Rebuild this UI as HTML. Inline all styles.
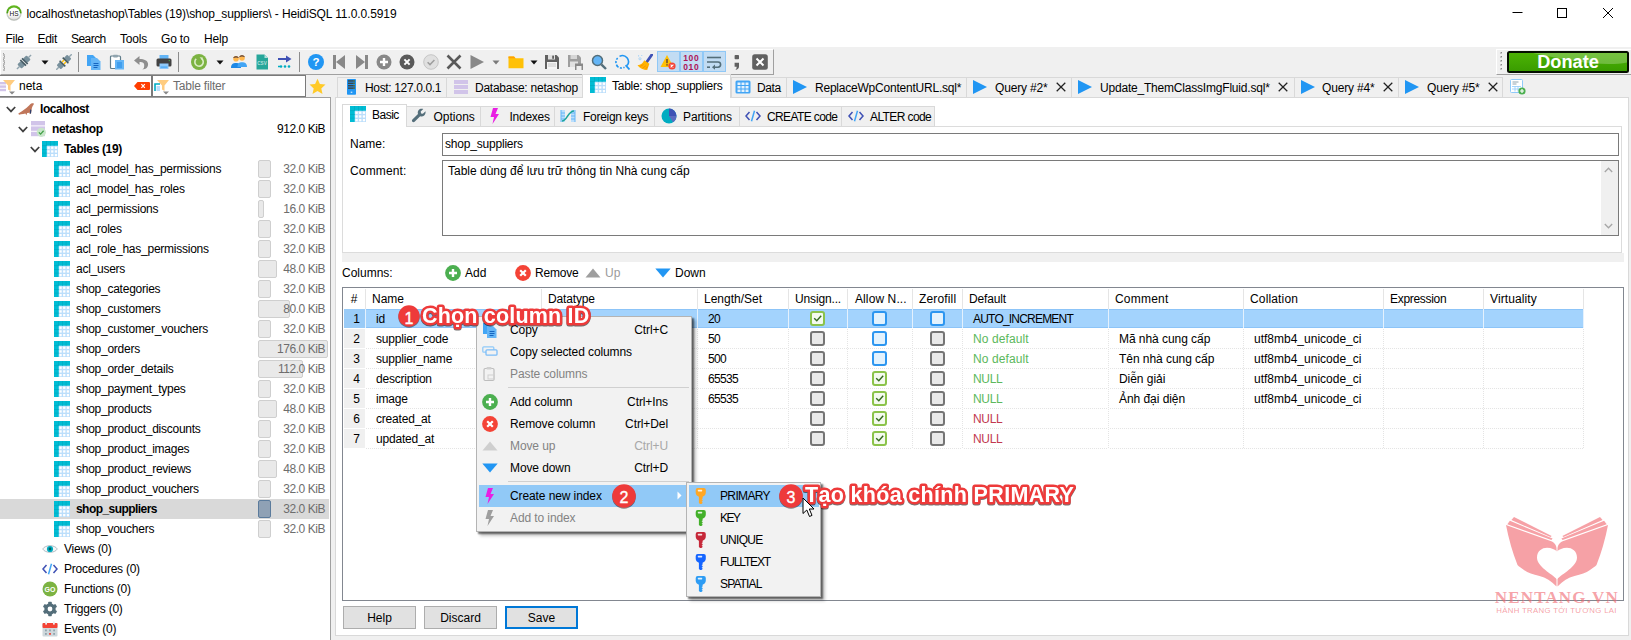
<!DOCTYPE html><html><head><meta charset="utf-8"><title>HeidiSQL</title><style>
html,body{margin:0;padding:0}
body{width:1631px;height:640px;position:relative;overflow:hidden;background:#f0f0f0;font-family:"Liberation Sans",sans-serif;font-size:12px;color:#000}
.b{position:absolute;box-sizing:border-box}
.t{position:absolute;white-space:nowrap;line-height:16px;height:16px;font-size:12px}
.bold{font-weight:bold;letter-spacing:-0.55px}
.gray{color:#6d6d6d}
.r{text-align:right}
.c{text-align:center}
.sz{letter-spacing:-0.45px}
.tn{letter-spacing:-0.25px}
</style></head><body>
<div class="b " style="left:0px;top:0px;width:1631px;height:47px;background:#fff"></div>
<svg class="b" style="left:6px;top:5px;" width="16" height="16" viewBox="0 0 16 16"><defs><linearGradient id="hg" x1="0" y1="0" x2="0" y2="1"><stop offset="0" stop-color="#66bb22"/><stop offset="0.48" stop-color="#4c9e14"/><stop offset="0.56" stop-color="#cfd4cc"/><stop offset="1" stop-color="#b4b8b2"/></linearGradient><linearGradient id="hg2" x1="0" y1="0" x2="0" y2="1"><stop offset="0.55" stop-color="#ffffff"/><stop offset="1" stop-color="#dcdcdc"/></linearGradient></defs><circle cx="8" cy="8" r="7.700" fill="url(#hg)"/><circle cx="8" cy="8.600" r="6" fill="url(#hg2)"/><text x="8" y="11.400" font-size="8" text-anchor="middle" fill="#111" font-family="Liberation Sans, sans-serif" textLength="9" lengthAdjust="spacingAndGlyphs">HS</text></svg>
<div class="t " style="left:26.5px;top:6px;letter-spacing:-0.11px">localhost\netashop\Tables (19)\shop_suppliers\ - HeidiSQL 11.0.0.5919</div>
<svg class="b" style="left:1512px;top:6px;" width="12" height="12" viewBox="0 0 12 12"><path d="M0.5 6.5h10" stroke="#000" stroke-width="1"/></svg>
<svg class="b" style="left:1556px;top:7px;" width="12" height="12" viewBox="0 0 12 12"><rect x="1.5" y="1.5" width="9" height="9" fill="none" stroke="#000" stroke-width="1"/></svg>
<svg class="b" style="left:1602px;top:7px;" width="12" height="12" viewBox="0 0 12 12"><path d="M1 1l10 10M11 1L1 11" stroke="#000" stroke-width="1"/></svg>
<div class="t " style="left:5.5px;top:31px;letter-spacing:-0.3px">File</div>
<div class="t " style="left:37.5px;top:31px;letter-spacing:-0.3px">Edit</div>
<div class="t " style="left:71px;top:31px;letter-spacing:-0.55px">Search</div>
<div class="t " style="left:120px;top:31px;letter-spacing:-0.2px">Tools</div>
<div class="t " style="left:161px;top:31px;letter-spacing:-0.2px">Go to</div>
<div class="t " style="left:204px;top:31px;letter-spacing:-0.15px">Help</div>
<div class="b " style="left:0px;top:49px;width:774px;height:26px;border:1px solid #fff;border-right:1px solid #a0a0a0;border-bottom:1px solid #a0a0a0;background:#f0f0f0"></div>
<div class="b " style="left:3px;top:53px;width:1px;height:1px;background:#a0a0a0"></div>
<div class="b " style="left:3px;top:54px;width:2px;height:2px;background:#bdbdbd"></div>
<div class="b " style="left:4px;top:56px;width:1px;height:1px;background:#a0a0a0"></div>
<div class="b " style="left:3px;top:57px;width:2px;height:2px;background:#bdbdbd"></div>
<div class="b " style="left:3px;top:59px;width:1px;height:1px;background:#a0a0a0"></div>
<div class="b " style="left:3px;top:60px;width:2px;height:2px;background:#bdbdbd"></div>
<div class="b " style="left:4px;top:62px;width:1px;height:1px;background:#a0a0a0"></div>
<div class="b " style="left:3px;top:63px;width:2px;height:2px;background:#bdbdbd"></div>
<div class="b " style="left:3px;top:65px;width:1px;height:1px;background:#a0a0a0"></div>
<div class="b " style="left:3px;top:66px;width:2px;height:2px;background:#bdbdbd"></div>
<div class="b " style="left:4px;top:68px;width:1px;height:1px;background:#a0a0a0"></div>
<div class="b " style="left:3px;top:69px;width:2px;height:2px;background:#bdbdbd"></div>
<svg class="b" style="left:16px;top:54px;" width="16" height="16" viewBox="0 0 16 16"><g transform="rotate(45 8 8)"><rect x="5" y="1.5" width="6" height="5" rx="1" fill="#78909c"/><rect x="5" y="9.5" width="6" height="5" rx="1" fill="#78909c"/><rect x="4" y="6" width="8" height="1.6" fill="#455a64"/><rect x="4" y="8.4" width="8" height="1.6" fill="#455a64"/><rect x="7.3" y="-2" width="1.4" height="4" fill="#90a4ae"/><rect x="7.3" y="14" width="1.4" height="4" fill="#90a4ae"/></g></svg>
<svg class="b" style="left:37px;top:54px;" width="16" height="16" viewBox="0 0 16 16"><path d="M4.5 6.5 L11.5 6.5 L8 10.5 Z" fill="#111"/></svg>
<svg class="b" style="left:56px;top:54px;" width="16" height="16" viewBox="0 0 16 16"><g transform="rotate(45 8 8)"><rect x="5" y="0.5" width="6" height="5" rx="1" fill="#78909c"/><rect x="5" y="10.5" width="6" height="5" rx="1" fill="#78909c"/><rect x="4" y="5" width="8" height="1.6" fill="#455a64"/><rect x="4" y="9.4" width="8" height="1.6" fill="#455a64"/><rect x="6" y="6.6" width="1.4" height="2.8" fill="#ffc107"/><rect x="8.6" y="6.6" width="1.4" height="2.8" fill="#ffc107"/><rect x="7.3" y="-3" width="1.4" height="4" fill="#90a4ae"/><rect x="7.3" y="15" width="1.4" height="4" fill="#90a4ae"/></g></svg>
<svg class="b" style="left:86px;top:54px;" width="16" height="16" viewBox="0 0 16 16"><path d="M1 1 h6 l3 3 v8 h-9z" fill="#42a5f5"/><path d="M5 4 h6 l3.5 3.5 v8.5 h-9.5z" fill="#64b5f6"/><path d="M7.500 9.500h5M7.500 11.500h5M7.500 13.500h4" stroke="#1565c0" stroke-width="1"/></svg>
<svg class="b" style="left:109px;top:54px;" width="16" height="16" viewBox="0 0 16 16"><rect x="1.5" y="2" width="10" height="12.5" rx="1" fill="#fff" stroke="#607d8b" stroke-width="1.2"/><rect x="4" y="0.8" width="5" height="2.6" rx="0.8" fill="#90a4ae"/><rect x="6" y="6" width="9" height="9.5" fill="#64b5f6"/><path d="M8 9h5M8 11h5M8 13h5" stroke="#1e88e5" stroke-width="1"/></svg>
<svg class="b" style="left:133px;top:54px;" width="16" height="16" viewBox="0 0 16 16"><path d="M6.5 2 L1 6.5 L6.5 11 V8 C10 8 12 9 11 13.5 C10.7 14.5 10 15.2 9 15.5 C13.5 15.5 15.5 12.5 15 9.5 C14.5 6.5 11.5 5 6.5 5 Z" fill="#8e8e8e"/></svg>
<svg class="b" style="left:156px;top:54px;" width="16" height="16" viewBox="0 0 16 16"><rect x="3.5" y="1" width="9" height="4.5" fill="#64b5f6"/><rect x="0.5" y="4.5" width="15" height="8" rx="1.5" fill="#424242"/><rect x="3.5" y="9.5" width="9" height="5.5" fill="#90caf9"/><rect x="4.5" y="12.5" width="7" height="1.2" fill="#42a5f5"/><circle cx="13.3" cy="6.6" r="0.7" fill="#4caf50"/></svg>
<svg class="b" style="left:191px;top:54px;" width="16" height="16" viewBox="0 0 16 16"><circle cx="8" cy="8" r="8" fill="#7cb342"/><path d="M10.8 4.8 A4.2 4.2 0 1 1 5.2 4.9" stroke="#dcedc8" stroke-width="1.6" fill="none"/><path d="M8.6 3.2 L11.8 3.4 L11.4 6.6 Z" fill="#dcedc8"/></svg>
<svg class="b" style="left:212px;top:54px;" width="16" height="16" viewBox="0 0 16 16"><path d="M4.5 6.5 L11.5 6.5 L8 10.5 Z" fill="#111"/></svg>
<svg class="b" style="left:231px;top:54px;" width="16" height="16" viewBox="0 0 16 16"><circle cx="5" cy="4.8" r="2.8" fill="#ffb74d"/><path d="M0 14 C0 10 2 9 5 9 C8 9 10 10 10 14Z" fill="#1e88e5"/><path d="M2.2 4 C2.6 1.5 7.4 1.5 7.8 4 C6 3.2 4 3.2 2.2 4Z" fill="#5d4037"/><circle cx="11" cy="4" r="2.8" fill="#ffb74d"/><path d="M6.5 13 C6.5 9.5 8 8.2 11 8.2 C14 8.2 16 9.5 16 13Z" fill="#42a5f5"/><path d="M8.2 3.2 C8.6 0.7 13.4 0.7 13.8 3.2 C12 2.4 10 2.4 8.2 3.2Z" fill="#5d4037"/></svg>
<svg class="b" style="left:254px;top:54px;" width="16" height="16" viewBox="0 0 16 16"><path d="M2.5 0.5 h8 l3.5 3.5 v11.5 h-11.5z" fill="#26a69a"/><path d="M10.5 0.5 l3.5 3.5 h-3.5z" fill="#b2dfdb"/><text x="8" y="11" font-size="4.6" font-weight="bold" text-anchor="middle" fill="#b2dfdb" font-family="Liberation Sans, sans-serif">CSV</text></svg>
<svg class="b" style="left:277px;top:54px;" width="16" height="16" viewBox="0 0 16 16"><path d="M1 5h9" stroke="#3f51b5" stroke-width="2"/><path d="M9 1.5 L14.5 5 L9 8.5Z" fill="#3f51b5"/><circle cx="4" cy="12.5" r="1.3" fill="#00acc1"/><circle cx="8" cy="12.5" r="1.3" fill="#00acc1"/><circle cx="12" cy="12.5" r="1.3" fill="#00acc1"/><path d="M1 12.5h2" stroke="#00acc1" stroke-width="1.4"/></svg>
<svg class="b" style="left:308px;top:54px;" width="16" height="16" viewBox="0 0 16 16"><circle cx="8" cy="8" r="8" fill="#2196f3"/><text x="8" y="12.2" font-size="11.5" font-weight="bold" text-anchor="middle" fill="#fff" font-family="Liberation Sans, sans-serif">?</text></svg>
<svg class="b" style="left:331px;top:54px;" width="16" height="16" viewBox="0 0 16 16"><rect x="2" y="1" width="3" height="14" fill="#888888"/><path d="M14 1 L5 8 L14 15Z" fill="#888888"/></svg>
<svg class="b" style="left:354px;top:54px;" width="16" height="16" viewBox="0 0 16 16"><rect x="11" y="1" width="3" height="14" fill="#888888"/><path d="M2 1 L11 8 L2 15Z" fill="#888888"/></svg>
<svg class="b" style="left:376px;top:54px;" width="16" height="16" viewBox="0 0 16 16"><circle cx="8" cy="8" r="7.5" fill="#888888"/><path d="M8 4v8M4 8h8" stroke="#fff" stroke-width="2.4"/></svg>
<svg class="b" style="left:399px;top:54px;" width="16" height="16" viewBox="0 0 16 16"><circle cx="8" cy="8" r="7.5" fill="#5a5a5a"/><path d="M5.4 5.4l5.2 5.2M10.6 5.4l-5.2 5.2" stroke="#fff" stroke-width="2"/></svg>
<svg class="b" style="left:423px;top:54px;" width="16" height="16" viewBox="0 0 16 16"><circle cx="8" cy="8" r="7.3" fill="#e0e0e0" stroke="#bdbdbd" stroke-width="0.8"/><path d="M4.6 8.2 l2.4 2.4 l4.4 -4.6" stroke="#9e9e9e" stroke-width="1.5" fill="none"/></svg>
<svg class="b" style="left:446px;top:54px;" width="16" height="16" viewBox="0 0 16 16"><path d="M1.500 1.500 L14.500 14.500 M14.500 1.500 L1.500 14.500" stroke="#5a5a5a" stroke-width="2.600"/></svg>
<svg class="b" style="left:469px;top:54px;" width="16" height="16" viewBox="0 0 16 16"><path d="M1.5 1 L15 8 L1.5 15 Z" fill="#888888"/></svg>
<svg class="b" style="left:488px;top:54px;" width="16" height="16" viewBox="0 0 16 16"><path d="M4.5 6.5 L11.5 6.5 L8 10.5 Z" fill="#7a7a7a"/></svg>
<svg class="b" style="left:508px;top:54px;" width="16" height="16" viewBox="0 0 16 16"><path d="M0.5 2.5 h5.5 l1.5 1.8 h8 v10 h-15z" fill="#ffc107"/><path d="M0.5 2.5 h5.5 l1.5 1.8 h-7z" fill="#ffa000"/></svg>
<svg class="b" style="left:526px;top:54px;" width="16" height="16" viewBox="0 0 16 16"><path d="M4.5 6.5 L11.5 6.5 L8 10.5 Z" fill="#111"/></svg>
<svg class="b" style="left:544px;top:54px;" width="16" height="16" viewBox="0 0 16 16"><path d="M1 1 h11.5 l2.5 2.5 v11.5 h-14z" fill="#616161"/><rect x="4" y="1" width="7" height="4.5" fill="#e0e0e0"/><rect x="8.2" y="1.6" width="1.8" height="3.2" fill="#616161"/><rect x="3" y="8" width="10" height="7" fill="#f5f5f5"/><path d="M4 10h8M4 12h8" stroke="#bdbdbd" stroke-width="0.8"/></svg>
<svg class="b" style="left:567px;top:54px;" width="16" height="16" viewBox="0 0 16 16"><path d="M1 1 h10.5 l2.5 2.5 v9.5 h-13z" fill="#9e9e9e"/><rect x="3.5" y="1" width="6.5" height="4" fill="#d6d6d6"/><rect x="3" y="7.5" width="8" height="5.5" fill="#e0e0e0"/><rect x="8" y="9.5" width="8" height="6.5" fill="#888888"/><rect x="9.5" y="12" width="5" height="4" fill="#eee"/></svg>
<svg class="b" style="left:591px;top:54px;" width="16" height="16" viewBox="0 0 16 16"><circle cx="6.5" cy="6.5" r="5" fill="#64b5f6" stroke="#546e7a" stroke-width="1.5"/><path d="M10.3 10.3 L15 15" stroke="#546e7a" stroke-width="2.4"/></svg>
<svg class="b" style="left:614px;top:54px;" width="16" height="16" viewBox="0 0 16 16"><path d="M3.5 12.2 A6 6 0 0 1 4 3.6" stroke="#2196f3" stroke-width="1.6" fill="none" stroke-dasharray="2 1.4"/><path d="M5.5 2.4 A6 6 0 0 1 13 11.5" stroke="#2196f3" stroke-width="1.6" fill="none"/><path d="M11.6 11.2 L15.5 15.5" stroke="#2196f3" stroke-width="1.8"/><path d="M3 12 A6 6 0 0 0 10.5 13.2" stroke="#2196f3" stroke-width="1.6" fill="none" stroke-dasharray="2 1.4"/></svg>
<svg class="b" style="left:637px;top:54px;" width="16" height="16" viewBox="0 0 16 16"><path d="M14.800 0.800 L9.600 8.200" stroke="#3f51b5" stroke-width="2.800" stroke-linecap="round"/><path d="M7.200 6.200 L12.400 9.800 L10.200 16 C6.500 16 2.500 14.200 0.500 11.200 C3.800 10.800 6 9 7.200 6.200Z" fill="#ffb300"/><path d="M3 12.500 L6.500 10.500M5.500 14.200 L8.800 11.800M8.500 15.300 L10.500 12.500" stroke="#fb8c00" stroke-width="0.900"/><circle cx="3" cy="4.800" r="1.100" fill="none" stroke="#90caf9" stroke-width="0.700"/><circle cx="1.600" cy="1.800" r="0.600" fill="#90caf9"/><circle cx="4.800" cy="1.600" r="0.500" fill="#90caf9"/></svg>
<svg class="b" style="left:729px;top:54px;" width="16" height="16" viewBox="0 0 16 16"><rect x="5.600" y="1" width="4.400" height="4.200" rx="0.800" fill="#616161"/><path d="M5.600 8.800h4.400v3.600c0 1.800-1.200 3.200-3.600 3.600 1-.9 1.300-1.800 1.200-3.200H5.600z" fill="#616161"/></svg>
<svg class="b" style="left:752px;top:54px;" width="16" height="16" viewBox="0 0 16 16"><rect x="0.200" y="0.200" width="15.600" height="15.600" rx="2.500" fill="#616161"/><path d="M4.5 4.5l7 7M11.5 4.5l-7 7" stroke="#fff" stroke-width="2"/></svg>
<div class="b " style="left:657px;top:51px;width:23px;height:21px;background:#c2dcf3;border:1px solid #90c8f6"></div>
<svg class="b" style="left:660px;top:54px;" width="16" height="16" viewBox="0 0 16 16"><path d="M7 1 L13.5 13 H0.5 Z" fill="#ffc107"/><rect x="6.3" y="5" width="1.4" height="4.2" fill="#5d4037"/><rect x="6.3" y="10.2" width="1.4" height="1.4" fill="#5d4037"/><circle cx="12" cy="12" r="3.6" fill="#f44336"/><path d="M10.6 10.6l2.8 2.8M13.4 10.6l-2.8 2.8" stroke="#fff" stroke-width="1.1"/></svg>
<div class="b " style="left:680px;top:51px;width:23px;height:21px;background:#c2dcf3;border:1px solid #90c8f6"></div>
<svg class="b" style="left:683px;top:54px;" width="16" height="16" viewBox="0 0 16 16"><text x="8.300" y="7" font-size="8.500" font-weight="bold" text-anchor="middle" fill="#ad1457" font-family="Liberation Sans, sans-serif" letter-spacing="0.600">100</text><text x="8.300" y="15.500" font-size="8.500" font-weight="bold" text-anchor="middle" fill="#ad1457" font-family="Liberation Sans, sans-serif" letter-spacing="0.600">010</text></svg>
<div class="b " style="left:703px;top:51px;width:23px;height:21px;background:#c2dcf3;border:1px solid #90c8f6"></div>
<svg class="b" style="left:706px;top:54px;" width="16" height="16" viewBox="0 0 16 16"><path d="M1 3.5h14" stroke="#546e7a" stroke-width="1.6" fill="none"/><path d="M1 8h11 a2.6 2.6 0 0 1 0 5.2 h-4" stroke="#546e7a" stroke-width="1.6" fill="none"/><path d="M9 10.6 L6 13.2 L9 15.8Z" fill="#546e7a"/><path d="M1 13.2h3" stroke="#546e7a" stroke-width="1.6"/></svg>
<div class="b " style="left:78px;top:52px;width:1px;height:20px;background:#8d8d8d"></div>
<div class="b " style="left:178px;top:52px;width:1px;height:20px;background:#8d8d8d"></div>
<div class="b " style="left:299px;top:52px;width:1px;height:20px;background:#8d8d8d"></div>
<div class="b " style="left:1496px;top:49px;width:135px;height:26px;border-left:1px solid #fff;border-top:1px solid #fff;border-bottom:1px solid #a0a0a0;background:#f0f0f0"></div>
<div class="b " style="left:1500px;top:52px;width:2px;height:2px;background:#c4c4c4"></div>
<div class="b " style="left:1501px;top:52px;width:1px;height:1px;background:#8a8a8a"></div>
<div class="b " style="left:1500px;top:56px;width:2px;height:2px;background:#c4c4c4"></div>
<div class="b " style="left:1501px;top:56px;width:1px;height:1px;background:#8a8a8a"></div>
<div class="b " style="left:1500px;top:60px;width:2px;height:2px;background:#c4c4c4"></div>
<div class="b " style="left:1501px;top:60px;width:1px;height:1px;background:#8a8a8a"></div>
<div class="b " style="left:1500px;top:64px;width:2px;height:2px;background:#c4c4c4"></div>
<div class="b " style="left:1501px;top:64px;width:1px;height:1px;background:#8a8a8a"></div>
<div class="b " style="left:1500px;top:68px;width:2px;height:2px;background:#c4c4c4"></div>
<div class="b " style="left:1501px;top:68px;width:1px;height:1px;background:#8a8a8a"></div>
<div class="b " style="left:1507px;top:51px;width:122px;height:22px;background:linear-gradient(180deg,#4bb004 0%,#43a802 50%,#3a9c00 100%);border:2px solid #050f00;border-radius:2.5px"></div>
<svg class="b" style="left:1509px;top:53px;" width="118" height="18" viewBox="0 0 118 18"><path d="M24 0 H118 V9.500 C95 14 60 8 24 0Z" fill="#fff" opacity=".24"/></svg>
<div class="t " style="left:1507px;top:53px;width:122px;text-align:center;color:#fff;font-weight:bold;font-size:18.2px;line-height:19px;height:19px;letter-spacing:0px">Donate</div>
<div class="b " style="left:0px;top:75px;width:152px;height:22px;background:#fff;border:1px solid #7a7a7a;border-left:none"></div>
<div class="b " style="left:152px;top:75px;width:154px;height:22px;background:#fff;border:1px solid #7a7a7a"></div>
<svg class="b" style="left:0px;top:79px;" width="16" height="16" viewBox="0 0 16 16"><rect x="0" y="3" width="6" height="2.4" fill="#d1c4e9"/><rect x="0" y="6.4" width="6" height="2.4" fill="#d1c4e9"/><rect x="0" y="9.8" width="6" height="2.4" fill="#d1c4e9"/><path d="M3 1 H15 L10.5 6.5 V12 L8 10.5 V6.5 Z" fill="#ffcc80"/><path d="M9 12.5 h6 l-3 3z" fill="#888888"/></svg>
<svg class="b" style="left:154px;top:79px;" width="16" height="16" viewBox="0 0 16 16"><path d="M1 12 V5 H6" stroke="#00acc1" stroke-width="1.6" fill="none"/><rect x="2.5" y="7" width="3.5" height="5" fill="#bbdefb"/><path d="M3 1 H15 L10.5 6.5 V12 L8 10.5 V6.5 Z" fill="#ffcc80"/><path d="M9 12.5 h6 l-3 3z" fill="#888888"/></svg>
<div class="t " style="left:19px;top:78px;">neta</div>
<div class="t gray" style="left:173px;top:78px;letter-spacing:-0.2px">Table filter</div>
<svg class="b" style="left:134px;top:82px;" width="16" height="8" viewBox="0 0 16 8"><path d="M0 4 L3.5 0 H15 a1 1 0 0 1 1 1 V7 a1 1 0 0 1 -1 1 H3.500 Z" fill="#ff3d00"/><path d="M7.400 2.200l3.400 3.600M10.800 2.200L7.400 5.800" stroke="#fff" stroke-width="1.200"/></svg>
<svg class="b" style="left:309px;top:78px;" width="17" height="17" viewBox="0 0 17 17"><path d="M8.5 0.8 L10.9 6 L16.5 6.6 L12.3 10.4 L13.5 16 L8.5 13.1 L3.5 16 L4.7 10.4 L0.5 6.6 L6.1 6 Z" fill="#ffca28"/></svg>
<div class="b " style="left:0px;top:97px;width:331px;height:543px;background:#fff;border-top:1px solid #a0a0a0;border-right:1px solid #a0a0a0"></div>
<div class="b " style="left:331px;top:98px;width:4px;height:542px;background:#f0f0f0"></div>
<div class="b " style="left:0px;top:499px;width:329px;height:20px;background:#d9d9d9"></div>
<svg class="b" style="left:6px;top:106px;" width="10" height="7" viewBox="0 0 10 7"><path d="M0.8 1 L5 5.4 L9.2 1" stroke="#404040" stroke-width="1.700" fill="none"/></svg>
<svg class="b" style="left:18px;top:100px;" width="16" height="16" viewBox="0 0 16 16"><g transform="translate(0 1.2)"><path d="M0.300 12.400 C2.500 11 4.500 9.300 7 7.700 C9.500 6.200 10.800 4.800 12 3.400 C12.800 2.400 14.200 2 15.800 2.200 C15.900 3 15.400 3.800 14.900 4.400 C14.200 5.500 13.800 7 13.500 8.500 L13 12.400 L11.800 12.600 L11.400 11.200 C10.500 11.500 9.800 11.700 9.200 11.800 L8.400 14 L7.400 12.200 C6 12.500 4.500 12.700 3 13 L1 13.600 Z" fill="#c0765a"/><path d="M12.200 8.300 L13.500 8.600 L13 12.400 L11.800 12.600 Z" fill="#2c3e6b"/></g></svg>
<div class="t bold" style="left:40px;top:101px;letter-spacing:-0.42px">localhost</div>
<svg class="b" style="left:18px;top:126px;" width="10" height="7" viewBox="0 0 10 7"><path d="M0.8 1 L5 5.4 L9.2 1" stroke="#404040" stroke-width="1.700" fill="none"/></svg>
<svg class="b" style="left:30px;top:121px;" width="16" height="16" viewBox="0 0 16 16"><rect x="1" y="0" width="14" height="4.4" fill="#d1c4e9"/><rect x="1" y="5.4" width="14" height="4.4" fill="#d1c4e9"/><rect x="1" y="10.8" width="14" height="4.4" fill="#d1c4e9"/><circle cx="11.3" cy="11.3" r="4.6" fill="#c8e6c9"/><path d="M8.9 11.4 l1.7 1.7 l3 -3.3" stroke="#43a047" stroke-width="1.3" fill="none"/></svg>
<div class="t bold" style="left:52px;top:121px;letter-spacing:-0.33px">netashop</div>
<div class="t r sz" style="left:225px;top:121px;width:100px;">912.0 KiB</div>
<svg class="b" style="left:30px;top:146px;" width="10" height="7" viewBox="0 0 10 7"><path d="M0.8 1 L5 5.4 L9.2 1" stroke="#404040" stroke-width="1.700" fill="none"/></svg>
<svg class="b" style="left:42px;top:141px;" width="16" height="16" viewBox="0 0 16 16"><rect x="0" y="0" width="16" height="16" fill="#bbdefb"/><rect x="0" y="0" width="16" height="4.7" fill="#00bcd4"/><rect x="0" y="0" width="4.7" height="16" fill="#00bcd4"/><g fill="#00acc1"><rect x="4.2" y="0" width="0.8" height="4.7"/><rect x="8" y="0" width="0.8" height="4.7"/><rect x="11.7" y="0" width="0.8" height="4.7"/><rect x="0" y="4.3" width="4.7" height="0.8"/><rect x="0" y="8" width="4.7" height="0.8"/><rect x="0" y="11.7" width="4.7" height="0.8"/></g><g fill="#fff"><rect x="5.4" y="5.6" width="2.3" height="2.3"/><rect x="9.1" y="5.6" width="2.3" height="2.3"/><rect x="12.8" y="5.6" width="2.3" height="2.3"/><rect x="5.4" y="9.3" width="2.3" height="2.3"/><rect x="9.1" y="9.3" width="2.3" height="2.3"/><rect x="12.8" y="9.3" width="2.3" height="2.3"/><rect x="5.4" y="13" width="2.3" height="2.3"/><rect x="9.1" y="13" width="2.3" height="2.3"/><rect x="12.8" y="13" width="2.3" height="2.3"/></g></svg>
<div class="t bold" style="left:64px;top:141px;letter-spacing:-0.36px">Tables (19)</div>
<svg class="b" style="left:54px;top:161px;" width="16" height="16" viewBox="0 0 16 16"><rect x="0" y="0" width="16" height="16" fill="#bbdefb"/><rect x="0" y="0" width="16" height="4.7" fill="#00bcd4"/><rect x="0" y="0" width="4.7" height="16" fill="#00bcd4"/><g fill="#00acc1"><rect x="4.2" y="0" width="0.8" height="4.7"/><rect x="8" y="0" width="0.8" height="4.7"/><rect x="11.7" y="0" width="0.8" height="4.7"/><rect x="0" y="4.3" width="4.7" height="0.8"/><rect x="0" y="8" width="4.7" height="0.8"/><rect x="0" y="11.7" width="4.7" height="0.8"/></g><g fill="#fff"><rect x="5.4" y="5.6" width="2.3" height="2.3"/><rect x="9.1" y="5.6" width="2.3" height="2.3"/><rect x="12.8" y="5.6" width="2.3" height="2.3"/><rect x="5.4" y="9.3" width="2.3" height="2.3"/><rect x="9.1" y="9.3" width="2.3" height="2.3"/><rect x="12.8" y="9.3" width="2.3" height="2.3"/><rect x="5.4" y="13" width="2.3" height="2.3"/><rect x="9.1" y="13" width="2.3" height="2.3"/><rect x="12.8" y="13" width="2.3" height="2.3"/></g></svg>
<div class="t tn" style="left:76px;top:161px;">acl_model_has_permissions</div>
<div class="b " style="left:258px;top:160px;width:13px;height:18px;background:#e9e9e9;border:1px solid #cfcfcf;border-radius:2px"></div>
<div class="t r sz gray" style="left:225px;top:161px;width:100px;">32.0 KiB</div>
<svg class="b" style="left:54px;top:181px;" width="16" height="16" viewBox="0 0 16 16"><rect x="0" y="0" width="16" height="16" fill="#bbdefb"/><rect x="0" y="0" width="16" height="4.7" fill="#00bcd4"/><rect x="0" y="0" width="4.7" height="16" fill="#00bcd4"/><g fill="#00acc1"><rect x="4.2" y="0" width="0.8" height="4.7"/><rect x="8" y="0" width="0.8" height="4.7"/><rect x="11.7" y="0" width="0.8" height="4.7"/><rect x="0" y="4.3" width="4.7" height="0.8"/><rect x="0" y="8" width="4.7" height="0.8"/><rect x="0" y="11.7" width="4.7" height="0.8"/></g><g fill="#fff"><rect x="5.4" y="5.6" width="2.3" height="2.3"/><rect x="9.1" y="5.6" width="2.3" height="2.3"/><rect x="12.8" y="5.6" width="2.3" height="2.3"/><rect x="5.4" y="9.3" width="2.3" height="2.3"/><rect x="9.1" y="9.3" width="2.3" height="2.3"/><rect x="12.8" y="9.3" width="2.3" height="2.3"/><rect x="5.4" y="13" width="2.3" height="2.3"/><rect x="9.1" y="13" width="2.3" height="2.3"/><rect x="12.8" y="13" width="2.3" height="2.3"/></g></svg>
<div class="t tn" style="left:76px;top:181px;">acl_model_has_roles</div>
<div class="b " style="left:258px;top:180px;width:13px;height:18px;background:#e9e9e9;border:1px solid #cfcfcf;border-radius:2px"></div>
<div class="t r sz gray" style="left:225px;top:181px;width:100px;">32.0 KiB</div>
<svg class="b" style="left:54px;top:201px;" width="16" height="16" viewBox="0 0 16 16"><rect x="0" y="0" width="16" height="16" fill="#bbdefb"/><rect x="0" y="0" width="16" height="4.7" fill="#00bcd4"/><rect x="0" y="0" width="4.7" height="16" fill="#00bcd4"/><g fill="#00acc1"><rect x="4.2" y="0" width="0.8" height="4.7"/><rect x="8" y="0" width="0.8" height="4.7"/><rect x="11.7" y="0" width="0.8" height="4.7"/><rect x="0" y="4.3" width="4.7" height="0.8"/><rect x="0" y="8" width="4.7" height="0.8"/><rect x="0" y="11.7" width="4.7" height="0.8"/></g><g fill="#fff"><rect x="5.4" y="5.6" width="2.3" height="2.3"/><rect x="9.1" y="5.6" width="2.3" height="2.3"/><rect x="12.8" y="5.6" width="2.3" height="2.3"/><rect x="5.4" y="9.3" width="2.3" height="2.3"/><rect x="9.1" y="9.3" width="2.3" height="2.3"/><rect x="12.8" y="9.3" width="2.3" height="2.3"/><rect x="5.4" y="13" width="2.3" height="2.3"/><rect x="9.1" y="13" width="2.3" height="2.3"/><rect x="12.8" y="13" width="2.3" height="2.3"/></g></svg>
<div class="t tn" style="left:76px;top:201px;">acl_permissions</div>
<div class="b " style="left:258px;top:200px;width:6px;height:18px;background:#e9e9e9;border:1px solid #cfcfcf;border-radius:2px"></div>
<div class="t r sz gray" style="left:225px;top:201px;width:100px;">16.0 KiB</div>
<svg class="b" style="left:54px;top:221px;" width="16" height="16" viewBox="0 0 16 16"><rect x="0" y="0" width="16" height="16" fill="#bbdefb"/><rect x="0" y="0" width="16" height="4.7" fill="#00bcd4"/><rect x="0" y="0" width="4.7" height="16" fill="#00bcd4"/><g fill="#00acc1"><rect x="4.2" y="0" width="0.8" height="4.7"/><rect x="8" y="0" width="0.8" height="4.7"/><rect x="11.7" y="0" width="0.8" height="4.7"/><rect x="0" y="4.3" width="4.7" height="0.8"/><rect x="0" y="8" width="4.7" height="0.8"/><rect x="0" y="11.7" width="4.7" height="0.8"/></g><g fill="#fff"><rect x="5.4" y="5.6" width="2.3" height="2.3"/><rect x="9.1" y="5.6" width="2.3" height="2.3"/><rect x="12.8" y="5.6" width="2.3" height="2.3"/><rect x="5.4" y="9.3" width="2.3" height="2.3"/><rect x="9.1" y="9.3" width="2.3" height="2.3"/><rect x="12.8" y="9.3" width="2.3" height="2.3"/><rect x="5.4" y="13" width="2.3" height="2.3"/><rect x="9.1" y="13" width="2.3" height="2.3"/><rect x="12.8" y="13" width="2.3" height="2.3"/></g></svg>
<div class="t tn" style="left:76px;top:221px;">acl_roles</div>
<div class="b " style="left:258px;top:220px;width:13px;height:18px;background:#e9e9e9;border:1px solid #cfcfcf;border-radius:2px"></div>
<div class="t r sz gray" style="left:225px;top:221px;width:100px;">32.0 KiB</div>
<svg class="b" style="left:54px;top:241px;" width="16" height="16" viewBox="0 0 16 16"><rect x="0" y="0" width="16" height="16" fill="#bbdefb"/><rect x="0" y="0" width="16" height="4.7" fill="#00bcd4"/><rect x="0" y="0" width="4.7" height="16" fill="#00bcd4"/><g fill="#00acc1"><rect x="4.2" y="0" width="0.8" height="4.7"/><rect x="8" y="0" width="0.8" height="4.7"/><rect x="11.7" y="0" width="0.8" height="4.7"/><rect x="0" y="4.3" width="4.7" height="0.8"/><rect x="0" y="8" width="4.7" height="0.8"/><rect x="0" y="11.7" width="4.7" height="0.8"/></g><g fill="#fff"><rect x="5.4" y="5.6" width="2.3" height="2.3"/><rect x="9.1" y="5.6" width="2.3" height="2.3"/><rect x="12.8" y="5.6" width="2.3" height="2.3"/><rect x="5.4" y="9.3" width="2.3" height="2.3"/><rect x="9.1" y="9.3" width="2.3" height="2.3"/><rect x="12.8" y="9.3" width="2.3" height="2.3"/><rect x="5.4" y="13" width="2.3" height="2.3"/><rect x="9.1" y="13" width="2.3" height="2.3"/><rect x="12.8" y="13" width="2.3" height="2.3"/></g></svg>
<div class="t tn" style="left:76px;top:241px;">acl_role_has_permissions</div>
<div class="b " style="left:258px;top:240px;width:13px;height:18px;background:#e9e9e9;border:1px solid #cfcfcf;border-radius:2px"></div>
<div class="t r sz gray" style="left:225px;top:241px;width:100px;">32.0 KiB</div>
<svg class="b" style="left:54px;top:261px;" width="16" height="16" viewBox="0 0 16 16"><rect x="0" y="0" width="16" height="16" fill="#bbdefb"/><rect x="0" y="0" width="16" height="4.7" fill="#00bcd4"/><rect x="0" y="0" width="4.7" height="16" fill="#00bcd4"/><g fill="#00acc1"><rect x="4.2" y="0" width="0.8" height="4.7"/><rect x="8" y="0" width="0.8" height="4.7"/><rect x="11.7" y="0" width="0.8" height="4.7"/><rect x="0" y="4.3" width="4.7" height="0.8"/><rect x="0" y="8" width="4.7" height="0.8"/><rect x="0" y="11.7" width="4.7" height="0.8"/></g><g fill="#fff"><rect x="5.4" y="5.6" width="2.3" height="2.3"/><rect x="9.1" y="5.6" width="2.3" height="2.3"/><rect x="12.8" y="5.6" width="2.3" height="2.3"/><rect x="5.4" y="9.3" width="2.3" height="2.3"/><rect x="9.1" y="9.3" width="2.3" height="2.3"/><rect x="12.8" y="9.3" width="2.3" height="2.3"/><rect x="5.4" y="13" width="2.3" height="2.3"/><rect x="9.1" y="13" width="2.3" height="2.3"/><rect x="12.8" y="13" width="2.3" height="2.3"/></g></svg>
<div class="t tn" style="left:76px;top:261px;">acl_users</div>
<div class="b " style="left:258px;top:260px;width:19px;height:18px;background:#e9e9e9;border:1px solid #cfcfcf;border-radius:2px"></div>
<div class="t r sz gray" style="left:225px;top:261px;width:100px;">48.0 KiB</div>
<svg class="b" style="left:54px;top:281px;" width="16" height="16" viewBox="0 0 16 16"><rect x="0" y="0" width="16" height="16" fill="#bbdefb"/><rect x="0" y="0" width="16" height="4.7" fill="#00bcd4"/><rect x="0" y="0" width="4.7" height="16" fill="#00bcd4"/><g fill="#00acc1"><rect x="4.2" y="0" width="0.8" height="4.7"/><rect x="8" y="0" width="0.8" height="4.7"/><rect x="11.7" y="0" width="0.8" height="4.7"/><rect x="0" y="4.3" width="4.7" height="0.8"/><rect x="0" y="8" width="4.7" height="0.8"/><rect x="0" y="11.7" width="4.7" height="0.8"/></g><g fill="#fff"><rect x="5.4" y="5.6" width="2.3" height="2.3"/><rect x="9.1" y="5.6" width="2.3" height="2.3"/><rect x="12.8" y="5.6" width="2.3" height="2.3"/><rect x="5.4" y="9.3" width="2.3" height="2.3"/><rect x="9.1" y="9.3" width="2.3" height="2.3"/><rect x="12.8" y="9.3" width="2.3" height="2.3"/><rect x="5.4" y="13" width="2.3" height="2.3"/><rect x="9.1" y="13" width="2.3" height="2.3"/><rect x="12.8" y="13" width="2.3" height="2.3"/></g></svg>
<div class="t tn" style="left:76px;top:281px;">shop_categories</div>
<div class="b " style="left:258px;top:280px;width:13px;height:18px;background:#e9e9e9;border:1px solid #cfcfcf;border-radius:2px"></div>
<div class="t r sz gray" style="left:225px;top:281px;width:100px;">32.0 KiB</div>
<svg class="b" style="left:54px;top:301px;" width="16" height="16" viewBox="0 0 16 16"><rect x="0" y="0" width="16" height="16" fill="#bbdefb"/><rect x="0" y="0" width="16" height="4.7" fill="#00bcd4"/><rect x="0" y="0" width="4.7" height="16" fill="#00bcd4"/><g fill="#00acc1"><rect x="4.2" y="0" width="0.8" height="4.7"/><rect x="8" y="0" width="0.8" height="4.7"/><rect x="11.7" y="0" width="0.8" height="4.7"/><rect x="0" y="4.3" width="4.7" height="0.8"/><rect x="0" y="8" width="4.7" height="0.8"/><rect x="0" y="11.7" width="4.7" height="0.8"/></g><g fill="#fff"><rect x="5.4" y="5.6" width="2.3" height="2.3"/><rect x="9.1" y="5.6" width="2.3" height="2.3"/><rect x="12.8" y="5.6" width="2.3" height="2.3"/><rect x="5.4" y="9.3" width="2.3" height="2.3"/><rect x="9.1" y="9.3" width="2.3" height="2.3"/><rect x="12.8" y="9.3" width="2.3" height="2.3"/><rect x="5.4" y="13" width="2.3" height="2.3"/><rect x="9.1" y="13" width="2.3" height="2.3"/><rect x="12.8" y="13" width="2.3" height="2.3"/></g></svg>
<div class="t tn" style="left:76px;top:301px;">shop_customers</div>
<div class="b " style="left:258px;top:300px;width:32px;height:18px;background:#e9e9e9;border:1px solid #cfcfcf;border-radius:2px"></div>
<div class="t r sz gray" style="left:225px;top:301px;width:100px;">80.0 KiB</div>
<svg class="b" style="left:54px;top:321px;" width="16" height="16" viewBox="0 0 16 16"><rect x="0" y="0" width="16" height="16" fill="#bbdefb"/><rect x="0" y="0" width="16" height="4.7" fill="#00bcd4"/><rect x="0" y="0" width="4.7" height="16" fill="#00bcd4"/><g fill="#00acc1"><rect x="4.2" y="0" width="0.8" height="4.7"/><rect x="8" y="0" width="0.8" height="4.7"/><rect x="11.7" y="0" width="0.8" height="4.7"/><rect x="0" y="4.3" width="4.7" height="0.8"/><rect x="0" y="8" width="4.7" height="0.8"/><rect x="0" y="11.7" width="4.7" height="0.8"/></g><g fill="#fff"><rect x="5.4" y="5.6" width="2.3" height="2.3"/><rect x="9.1" y="5.6" width="2.3" height="2.3"/><rect x="12.8" y="5.6" width="2.3" height="2.3"/><rect x="5.4" y="9.3" width="2.3" height="2.3"/><rect x="9.1" y="9.3" width="2.3" height="2.3"/><rect x="12.8" y="9.3" width="2.3" height="2.3"/><rect x="5.4" y="13" width="2.3" height="2.3"/><rect x="9.1" y="13" width="2.3" height="2.3"/><rect x="12.8" y="13" width="2.3" height="2.3"/></g></svg>
<div class="t tn" style="left:76px;top:321px;">shop_customer_vouchers</div>
<div class="b " style="left:258px;top:320px;width:13px;height:18px;background:#e9e9e9;border:1px solid #cfcfcf;border-radius:2px"></div>
<div class="t r sz gray" style="left:225px;top:321px;width:100px;">32.0 KiB</div>
<svg class="b" style="left:54px;top:341px;" width="16" height="16" viewBox="0 0 16 16"><rect x="0" y="0" width="16" height="16" fill="#bbdefb"/><rect x="0" y="0" width="16" height="4.7" fill="#00bcd4"/><rect x="0" y="0" width="4.7" height="16" fill="#00bcd4"/><g fill="#00acc1"><rect x="4.2" y="0" width="0.8" height="4.7"/><rect x="8" y="0" width="0.8" height="4.7"/><rect x="11.7" y="0" width="0.8" height="4.7"/><rect x="0" y="4.3" width="4.7" height="0.8"/><rect x="0" y="8" width="4.7" height="0.8"/><rect x="0" y="11.7" width="4.7" height="0.8"/></g><g fill="#fff"><rect x="5.4" y="5.6" width="2.3" height="2.3"/><rect x="9.1" y="5.6" width="2.3" height="2.3"/><rect x="12.8" y="5.6" width="2.3" height="2.3"/><rect x="5.4" y="9.3" width="2.3" height="2.3"/><rect x="9.1" y="9.3" width="2.3" height="2.3"/><rect x="12.8" y="9.3" width="2.3" height="2.3"/><rect x="5.4" y="13" width="2.3" height="2.3"/><rect x="9.1" y="13" width="2.3" height="2.3"/><rect x="12.8" y="13" width="2.3" height="2.3"/></g></svg>
<div class="t tn" style="left:76px;top:341px;">shop_orders</div>
<div class="b " style="left:258px;top:340px;width:70px;height:18px;background:#e9e9e9;border:1px solid #cfcfcf;border-radius:2px"></div>
<div class="t r sz gray" style="left:225px;top:341px;width:100px;">176.0 KiB</div>
<svg class="b" style="left:54px;top:361px;" width="16" height="16" viewBox="0 0 16 16"><rect x="0" y="0" width="16" height="16" fill="#bbdefb"/><rect x="0" y="0" width="16" height="4.7" fill="#00bcd4"/><rect x="0" y="0" width="4.7" height="16" fill="#00bcd4"/><g fill="#00acc1"><rect x="4.2" y="0" width="0.8" height="4.7"/><rect x="8" y="0" width="0.8" height="4.7"/><rect x="11.7" y="0" width="0.8" height="4.7"/><rect x="0" y="4.3" width="4.7" height="0.8"/><rect x="0" y="8" width="4.7" height="0.8"/><rect x="0" y="11.7" width="4.7" height="0.8"/></g><g fill="#fff"><rect x="5.4" y="5.6" width="2.3" height="2.3"/><rect x="9.1" y="5.6" width="2.3" height="2.3"/><rect x="12.8" y="5.6" width="2.3" height="2.3"/><rect x="5.4" y="9.3" width="2.3" height="2.3"/><rect x="9.1" y="9.3" width="2.3" height="2.3"/><rect x="12.8" y="9.3" width="2.3" height="2.3"/><rect x="5.4" y="13" width="2.3" height="2.3"/><rect x="9.1" y="13" width="2.3" height="2.3"/><rect x="12.8" y="13" width="2.3" height="2.3"/></g></svg>
<div class="t tn" style="left:76px;top:361px;">shop_order_details</div>
<div class="b " style="left:258px;top:360px;width:45px;height:18px;background:#e9e9e9;border:1px solid #cfcfcf;border-radius:2px"></div>
<div class="t r sz gray" style="left:225px;top:361px;width:100px;">112.0 KiB</div>
<svg class="b" style="left:54px;top:381px;" width="16" height="16" viewBox="0 0 16 16"><rect x="0" y="0" width="16" height="16" fill="#bbdefb"/><rect x="0" y="0" width="16" height="4.7" fill="#00bcd4"/><rect x="0" y="0" width="4.7" height="16" fill="#00bcd4"/><g fill="#00acc1"><rect x="4.2" y="0" width="0.8" height="4.7"/><rect x="8" y="0" width="0.8" height="4.7"/><rect x="11.7" y="0" width="0.8" height="4.7"/><rect x="0" y="4.3" width="4.7" height="0.8"/><rect x="0" y="8" width="4.7" height="0.8"/><rect x="0" y="11.7" width="4.7" height="0.8"/></g><g fill="#fff"><rect x="5.4" y="5.6" width="2.3" height="2.3"/><rect x="9.1" y="5.6" width="2.3" height="2.3"/><rect x="12.8" y="5.6" width="2.3" height="2.3"/><rect x="5.4" y="9.3" width="2.3" height="2.3"/><rect x="9.1" y="9.3" width="2.3" height="2.3"/><rect x="12.8" y="9.3" width="2.3" height="2.3"/><rect x="5.4" y="13" width="2.3" height="2.3"/><rect x="9.1" y="13" width="2.3" height="2.3"/><rect x="12.8" y="13" width="2.3" height="2.3"/></g></svg>
<div class="t tn" style="left:76px;top:381px;">shop_payment_types</div>
<div class="b " style="left:258px;top:380px;width:13px;height:18px;background:#e9e9e9;border:1px solid #cfcfcf;border-radius:2px"></div>
<div class="t r sz gray" style="left:225px;top:381px;width:100px;">32.0 KiB</div>
<svg class="b" style="left:54px;top:401px;" width="16" height="16" viewBox="0 0 16 16"><rect x="0" y="0" width="16" height="16" fill="#bbdefb"/><rect x="0" y="0" width="16" height="4.7" fill="#00bcd4"/><rect x="0" y="0" width="4.7" height="16" fill="#00bcd4"/><g fill="#00acc1"><rect x="4.2" y="0" width="0.8" height="4.7"/><rect x="8" y="0" width="0.8" height="4.7"/><rect x="11.7" y="0" width="0.8" height="4.7"/><rect x="0" y="4.3" width="4.7" height="0.8"/><rect x="0" y="8" width="4.7" height="0.8"/><rect x="0" y="11.7" width="4.7" height="0.8"/></g><g fill="#fff"><rect x="5.4" y="5.6" width="2.3" height="2.3"/><rect x="9.1" y="5.6" width="2.3" height="2.3"/><rect x="12.8" y="5.6" width="2.3" height="2.3"/><rect x="5.4" y="9.3" width="2.3" height="2.3"/><rect x="9.1" y="9.3" width="2.3" height="2.3"/><rect x="12.8" y="9.3" width="2.3" height="2.3"/><rect x="5.4" y="13" width="2.3" height="2.3"/><rect x="9.1" y="13" width="2.3" height="2.3"/><rect x="12.8" y="13" width="2.3" height="2.3"/></g></svg>
<div class="t tn" style="left:76px;top:401px;">shop_products</div>
<div class="b " style="left:258px;top:400px;width:19px;height:18px;background:#e9e9e9;border:1px solid #cfcfcf;border-radius:2px"></div>
<div class="t r sz gray" style="left:225px;top:401px;width:100px;">48.0 KiB</div>
<svg class="b" style="left:54px;top:421px;" width="16" height="16" viewBox="0 0 16 16"><rect x="0" y="0" width="16" height="16" fill="#bbdefb"/><rect x="0" y="0" width="16" height="4.7" fill="#00bcd4"/><rect x="0" y="0" width="4.7" height="16" fill="#00bcd4"/><g fill="#00acc1"><rect x="4.2" y="0" width="0.8" height="4.7"/><rect x="8" y="0" width="0.8" height="4.7"/><rect x="11.7" y="0" width="0.8" height="4.7"/><rect x="0" y="4.3" width="4.7" height="0.8"/><rect x="0" y="8" width="4.7" height="0.8"/><rect x="0" y="11.7" width="4.7" height="0.8"/></g><g fill="#fff"><rect x="5.4" y="5.6" width="2.3" height="2.3"/><rect x="9.1" y="5.6" width="2.3" height="2.3"/><rect x="12.8" y="5.6" width="2.3" height="2.3"/><rect x="5.4" y="9.3" width="2.3" height="2.3"/><rect x="9.1" y="9.3" width="2.3" height="2.3"/><rect x="12.8" y="9.3" width="2.3" height="2.3"/><rect x="5.4" y="13" width="2.3" height="2.3"/><rect x="9.1" y="13" width="2.3" height="2.3"/><rect x="12.8" y="13" width="2.3" height="2.3"/></g></svg>
<div class="t tn" style="left:76px;top:421px;">shop_product_discounts</div>
<div class="b " style="left:258px;top:420px;width:13px;height:18px;background:#e9e9e9;border:1px solid #cfcfcf;border-radius:2px"></div>
<div class="t r sz gray" style="left:225px;top:421px;width:100px;">32.0 KiB</div>
<svg class="b" style="left:54px;top:441px;" width="16" height="16" viewBox="0 0 16 16"><rect x="0" y="0" width="16" height="16" fill="#bbdefb"/><rect x="0" y="0" width="16" height="4.7" fill="#00bcd4"/><rect x="0" y="0" width="4.7" height="16" fill="#00bcd4"/><g fill="#00acc1"><rect x="4.2" y="0" width="0.8" height="4.7"/><rect x="8" y="0" width="0.8" height="4.7"/><rect x="11.7" y="0" width="0.8" height="4.7"/><rect x="0" y="4.3" width="4.7" height="0.8"/><rect x="0" y="8" width="4.7" height="0.8"/><rect x="0" y="11.7" width="4.7" height="0.8"/></g><g fill="#fff"><rect x="5.4" y="5.6" width="2.3" height="2.3"/><rect x="9.1" y="5.6" width="2.3" height="2.3"/><rect x="12.8" y="5.6" width="2.3" height="2.3"/><rect x="5.4" y="9.3" width="2.3" height="2.3"/><rect x="9.1" y="9.3" width="2.3" height="2.3"/><rect x="12.8" y="9.3" width="2.3" height="2.3"/><rect x="5.4" y="13" width="2.3" height="2.3"/><rect x="9.1" y="13" width="2.3" height="2.3"/><rect x="12.8" y="13" width="2.3" height="2.3"/></g></svg>
<div class="t tn" style="left:76px;top:441px;">shop_product_images</div>
<div class="b " style="left:258px;top:440px;width:13px;height:18px;background:#e9e9e9;border:1px solid #cfcfcf;border-radius:2px"></div>
<div class="t r sz gray" style="left:225px;top:441px;width:100px;">32.0 KiB</div>
<svg class="b" style="left:54px;top:461px;" width="16" height="16" viewBox="0 0 16 16"><rect x="0" y="0" width="16" height="16" fill="#bbdefb"/><rect x="0" y="0" width="16" height="4.7" fill="#00bcd4"/><rect x="0" y="0" width="4.7" height="16" fill="#00bcd4"/><g fill="#00acc1"><rect x="4.2" y="0" width="0.8" height="4.7"/><rect x="8" y="0" width="0.8" height="4.7"/><rect x="11.7" y="0" width="0.8" height="4.7"/><rect x="0" y="4.3" width="4.7" height="0.8"/><rect x="0" y="8" width="4.7" height="0.8"/><rect x="0" y="11.7" width="4.7" height="0.8"/></g><g fill="#fff"><rect x="5.4" y="5.6" width="2.3" height="2.3"/><rect x="9.1" y="5.6" width="2.3" height="2.3"/><rect x="12.8" y="5.6" width="2.3" height="2.3"/><rect x="5.4" y="9.3" width="2.3" height="2.3"/><rect x="9.1" y="9.3" width="2.3" height="2.3"/><rect x="12.8" y="9.3" width="2.3" height="2.3"/><rect x="5.4" y="13" width="2.3" height="2.3"/><rect x="9.1" y="13" width="2.3" height="2.3"/><rect x="12.8" y="13" width="2.3" height="2.3"/></g></svg>
<div class="t tn" style="left:76px;top:461px;">shop_product_reviews</div>
<div class="b " style="left:258px;top:460px;width:19px;height:18px;background:#e9e9e9;border:1px solid #cfcfcf;border-radius:2px"></div>
<div class="t r sz gray" style="left:225px;top:461px;width:100px;">48.0 KiB</div>
<svg class="b" style="left:54px;top:481px;" width="16" height="16" viewBox="0 0 16 16"><rect x="0" y="0" width="16" height="16" fill="#bbdefb"/><rect x="0" y="0" width="16" height="4.7" fill="#00bcd4"/><rect x="0" y="0" width="4.7" height="16" fill="#00bcd4"/><g fill="#00acc1"><rect x="4.2" y="0" width="0.8" height="4.7"/><rect x="8" y="0" width="0.8" height="4.7"/><rect x="11.7" y="0" width="0.8" height="4.7"/><rect x="0" y="4.3" width="4.7" height="0.8"/><rect x="0" y="8" width="4.7" height="0.8"/><rect x="0" y="11.7" width="4.7" height="0.8"/></g><g fill="#fff"><rect x="5.4" y="5.6" width="2.3" height="2.3"/><rect x="9.1" y="5.6" width="2.3" height="2.3"/><rect x="12.8" y="5.6" width="2.3" height="2.3"/><rect x="5.4" y="9.3" width="2.3" height="2.3"/><rect x="9.1" y="9.3" width="2.3" height="2.3"/><rect x="12.8" y="9.3" width="2.3" height="2.3"/><rect x="5.4" y="13" width="2.3" height="2.3"/><rect x="9.1" y="13" width="2.3" height="2.3"/><rect x="12.8" y="13" width="2.3" height="2.3"/></g></svg>
<div class="t tn" style="left:76px;top:481px;">shop_product_vouchers</div>
<div class="b " style="left:258px;top:480px;width:13px;height:18px;background:#e9e9e9;border:1px solid #cfcfcf;border-radius:2px"></div>
<div class="t r sz gray" style="left:225px;top:481px;width:100px;">32.0 KiB</div>
<svg class="b" style="left:54px;top:501px;" width="16" height="16" viewBox="0 0 16 16"><rect x="0" y="0" width="16" height="16" fill="#bbdefb"/><rect x="0" y="0" width="16" height="4.7" fill="#00bcd4"/><rect x="0" y="0" width="4.7" height="16" fill="#00bcd4"/><g fill="#00acc1"><rect x="4.2" y="0" width="0.8" height="4.7"/><rect x="8" y="0" width="0.8" height="4.7"/><rect x="11.7" y="0" width="0.8" height="4.7"/><rect x="0" y="4.3" width="4.7" height="0.8"/><rect x="0" y="8" width="4.7" height="0.8"/><rect x="0" y="11.7" width="4.7" height="0.8"/></g><g fill="#fff"><rect x="5.4" y="5.6" width="2.3" height="2.3"/><rect x="9.1" y="5.6" width="2.3" height="2.3"/><rect x="12.8" y="5.6" width="2.3" height="2.3"/><rect x="5.4" y="9.3" width="2.3" height="2.3"/><rect x="9.1" y="9.3" width="2.3" height="2.3"/><rect x="12.8" y="9.3" width="2.3" height="2.3"/><rect x="5.4" y="13" width="2.3" height="2.3"/><rect x="9.1" y="13" width="2.3" height="2.3"/><rect x="12.8" y="13" width="2.3" height="2.3"/></g></svg>
<div class="t bold" style="left:76px;top:501px;">shop_suppliers</div>
<div class="b " style="left:258px;top:500px;width:13px;height:18px;background:#8fa1b5;border:1px solid #5b7b9c;border-radius:2px"></div>
<div class="t r sz gray" style="left:225px;top:501px;width:100px;">32.0 KiB</div>
<svg class="b" style="left:54px;top:521px;" width="16" height="16" viewBox="0 0 16 16"><rect x="0" y="0" width="16" height="16" fill="#bbdefb"/><rect x="0" y="0" width="16" height="4.7" fill="#00bcd4"/><rect x="0" y="0" width="4.7" height="16" fill="#00bcd4"/><g fill="#00acc1"><rect x="4.2" y="0" width="0.8" height="4.7"/><rect x="8" y="0" width="0.8" height="4.7"/><rect x="11.7" y="0" width="0.8" height="4.7"/><rect x="0" y="4.3" width="4.7" height="0.8"/><rect x="0" y="8" width="4.7" height="0.8"/><rect x="0" y="11.7" width="4.7" height="0.8"/></g><g fill="#fff"><rect x="5.4" y="5.6" width="2.3" height="2.3"/><rect x="9.1" y="5.6" width="2.3" height="2.3"/><rect x="12.8" y="5.6" width="2.3" height="2.3"/><rect x="5.4" y="9.3" width="2.3" height="2.3"/><rect x="9.1" y="9.3" width="2.3" height="2.3"/><rect x="12.8" y="9.3" width="2.3" height="2.3"/><rect x="5.4" y="13" width="2.3" height="2.3"/><rect x="9.1" y="13" width="2.3" height="2.3"/><rect x="12.8" y="13" width="2.3" height="2.3"/></g></svg>
<div class="t tn" style="left:76px;top:521px;">shop_vouchers</div>
<div class="b " style="left:258px;top:520px;width:13px;height:18px;background:#e9e9e9;border:1px solid #cfcfcf;border-radius:2px"></div>
<div class="t r sz gray" style="left:225px;top:521px;width:100px;">32.0 KiB</div>
<svg class="b" style="left:42px;top:541px;" width="16" height="16" viewBox="0 0 16 16"><path d="M0.700 8 C3.200 3.600 12.800 3.600 15.300 8 C12.800 12.400 3.200 12.400 0.700 8Z" fill="#f5f7f8" stroke="#b0bec5" stroke-width="1"/><circle cx="8" cy="8" r="3.100" fill="#00acc1"/><circle cx="8" cy="8" r="1.400" fill="#006064"/></svg>
<div class="t tn" style="left:64px;top:541px;">Views (0)</div>
<svg class="b" style="left:42px;top:561px;" width="16" height="16" viewBox="0 0 16 16"><path d="M4.500 4 L1 8 L4.500 12 M11.500 4 L15 8 L11.500 12" stroke="#3f51b5" stroke-width="1.500" fill="none"/><path d="M9.500 2.800 L6.500 13.200" stroke="#42a5f5" stroke-width="1.500" fill="none"/></svg>
<div class="t tn" style="left:64px;top:561px;">Procedures (0)</div>
<svg class="b" style="left:42px;top:581px;" width="16" height="16" viewBox="0 0 16 16"><circle cx="8" cy="8" r="7.5" fill="#7cb342"/><text x="8" y="10.6" font-size="7" font-weight="bold" text-anchor="middle" fill="#fff" font-family="Liberation Sans, sans-serif">GO</text></svg>
<div class="t tn" style="left:64px;top:581px;">Functions (0)</div>
<svg class="b" style="left:42px;top:601px;" width="16" height="16" viewBox="0 0 16 16"><g fill="#546e7a"><circle cx="8" cy="8" r="5.700"/><rect x="6.200" y="0.800" width="3.600" height="14.400" rx="0.700"/><rect x="6.200" y="0.800" width="3.600" height="14.400" rx="0.700" transform="rotate(60 8 8)"/><rect x="6.200" y="0.800" width="3.600" height="14.400" rx="0.700" transform="rotate(120 8 8)"/></g><circle cx="8" cy="8" r="2.400" fill="#fff"/></svg>
<div class="t tn" style="left:64px;top:601px;">Triggers (0)</div>
<svg class="b" style="left:42px;top:621px;" width="16" height="16" viewBox="0 0 16 16"><rect x="0.500" y="2" width="15" height="13.500" rx="1" fill="#cfd8dc"/><rect x="0.500" y="2" width="15" height="5" rx="1" fill="#f44336"/><rect x="3.200" y="0.300" width="1.800" height="3.400" rx="0.800" fill="#eceff1"/><rect x="11" y="0.300" width="1.800" height="3.400" rx="0.800" fill="#eceff1"/><g fill="#90a4ae"><rect x="3" y="8.500" width="1.800" height="1.800"/><rect x="7.100" y="8.500" width="1.800" height="1.800"/><rect x="11.200" y="8.500" width="1.800" height="1.800"/><rect x="3" y="12" width="1.800" height="1.800"/><rect x="11.200" y="12" width="1.800" height="1.800"/></g><rect x="7.100" y="12" width="1.800" height="1.800" fill="#f44336"/></svg>
<div class="t tn" style="left:64px;top:621px;">Events (0)</div>
<div class="b " style="left:335px;top:97px;width:1294px;height:539px;background:#fff;border:1px solid #d9d9d9"></div>
<div class="b " style="left:337px;top:77px;width:110px;height:21px;background:#f0f0f0;border:1px solid #d9d9d9;border-bottom:1px solid #d9d9d9"></div>
<svg class="b" style="left:346.5px;top:79px;" width="16" height="16" viewBox="0 0 16 16"><rect x="0" y="0" width="9" height="15.700" rx="0.800" fill="#2196f3"/><g fill="#37474f"><rect x="1" y="1.200" width="7" height="1.500"/><rect x="1" y="3.600" width="7" height="1.500"/><rect x="1" y="6" width="7" height="1.500"/><rect x="1" y="8.400" width="7" height="1.500"/></g><g fill="#7cb342"><rect x="6.600" y="1.500" width="1" height="0.900"/><rect x="6.600" y="3.900" width="1" height="0.900"/><rect x="6.600" y="6.300" width="1" height="0.900"/><rect x="6.600" y="8.700" width="1" height="0.900"/></g><rect x="3.700" y="12.600" width="1.600" height="1.400" fill="#bbdefb"/></svg>
<div class="t " style="left:365px;top:80px;letter-spacing:-0.35px">Host: 127.0.0.1</div>
<div class="b " style="left:446px;top:77px;width:137px;height:21px;background:#f0f0f0;border:1px solid #d9d9d9;border-bottom:1px solid #d9d9d9"></div>
<svg class="b" style="left:453px;top:79px;" width="16" height="16" viewBox="0 0 16 16"><rect x="1" y="1" width="14" height="4" fill="#d1c4e9"/><rect x="1" y="6" width="14" height="4" fill="#d1c4e9"/><rect x="1" y="11" width="14" height="4" fill="#d1c4e9"/></svg>
<div class="t " style="left:475px;top:80px;letter-spacing:-0.25px">Database: netashop</div>
<div class="b " style="left:731px;top:77px;width:56px;height:21px;background:#f0f0f0;border:1px solid #d9d9d9;border-bottom:1px solid #d9d9d9"></div>
<svg class="b" style="left:735px;top:79px;" width="16" height="16" viewBox="0 0 16 16"><rect x="0.5" y="1.5" width="15" height="13" rx="1.5" fill="#42a5f5"/><g fill="#e3f2fd"><rect x="2.5" y="3.5" width="3" height="2.5"/><rect x="6.5" y="3.5" width="3" height="2.5"/><rect x="10.5" y="3.5" width="3" height="2.5"/><rect x="2.5" y="7" width="3" height="2.5"/><rect x="6.5" y="7" width="3" height="2.5"/><rect x="10.5" y="7" width="3" height="2.5"/><rect x="2.5" y="10.5" width="3" height="2.5"/><rect x="6.5" y="10.5" width="3" height="2.5"/><rect x="10.5" y="10.5" width="3" height="2.5"/></g></svg>
<div class="t " style="left:757px;top:80px;letter-spacing:-0.4px">Data</div>
<div class="b " style="left:786px;top:77px;width:181px;height:21px;background:#f0f0f0;border:1px solid #d9d9d9;border-bottom:1px solid #d9d9d9"></div>
<svg class="b" style="left:792px;top:79px;" width="16" height="16" viewBox="0 0 16 16"><path d="M1 1 L15 8 L1 15 Z" fill="#2196f3"/></svg>
<div class="t " style="left:815px;top:80px;letter-spacing:-0.22px">ReplaceWpContentURL.sql*</div>
<div class="b " style="left:966px;top:77px;width:106px;height:21px;background:#f0f0f0;border:1px solid #d9d9d9;border-bottom:1px solid #d9d9d9"></div>
<svg class="b" style="left:972px;top:79px;" width="16" height="16" viewBox="0 0 16 16"><path d="M1 1 L15 8 L1 15 Z" fill="#2196f3"/></svg>
<div class="t " style="left:995px;top:80px;letter-spacing:-0.17px">Query #2*</div>
<svg class="b" style="left:1056px;top:82px;" width="10" height="10" viewBox="0 0 10 10"><path d="M0.700 0.700 L9.300 9.300 M9.300 0.700 L0.700 9.300" stroke="#222" stroke-width="1.250" fill="none"/></svg>
<div class="b " style="left:1071px;top:77px;width:224px;height:21px;background:#f0f0f0;border:1px solid #d9d9d9;border-bottom:1px solid #d9d9d9"></div>
<svg class="b" style="left:1077px;top:79px;" width="16" height="16" viewBox="0 0 16 16"><path d="M1 1 L15 8 L1 15 Z" fill="#2196f3"/></svg>
<div class="t " style="left:1100px;top:80px;letter-spacing:-0.2px">Update_ThemClassImgFluid.sql*</div>
<svg class="b" style="left:1278px;top:82px;" width="10" height="10" viewBox="0 0 10 10"><path d="M0.700 0.700 L9.300 9.300 M9.300 0.700 L0.700 9.300" stroke="#222" stroke-width="1.250" fill="none"/></svg>
<div class="b " style="left:1294px;top:77px;width:105px;height:21px;background:#f0f0f0;border:1px solid #d9d9d9;border-bottom:1px solid #d9d9d9"></div>
<svg class="b" style="left:1300px;top:79px;" width="16" height="16" viewBox="0 0 16 16"><path d="M1 1 L15 8 L1 15 Z" fill="#2196f3"/></svg>
<div class="t " style="left:1322px;top:80px;letter-spacing:-0.17px">Query #4*</div>
<svg class="b" style="left:1383px;top:82px;" width="10" height="10" viewBox="0 0 10 10"><path d="M0.700 0.700 L9.300 9.300 M9.300 0.700 L0.700 9.300" stroke="#222" stroke-width="1.250" fill="none"/></svg>
<div class="b " style="left:1398px;top:77px;width:105px;height:21px;background:#f0f0f0;border:1px solid #d9d9d9;border-bottom:1px solid #d9d9d9"></div>
<svg class="b" style="left:1404px;top:79px;" width="16" height="16" viewBox="0 0 16 16"><path d="M1 1 L15 8 L1 15 Z" fill="#2196f3"/></svg>
<div class="t " style="left:1427px;top:80px;letter-spacing:-0.17px">Query #5*</div>
<svg class="b" style="left:1488px;top:82px;" width="10" height="10" viewBox="0 0 10 10"><path d="M0.700 0.700 L9.300 9.300 M9.300 0.700 L0.700 9.300" stroke="#222" stroke-width="1.250" fill="none"/></svg>
<div class="b " style="left:582px;top:74px;width:149px;height:24px;background:#fff;border:1px solid #d9d9d9;border-bottom:none"></div>
<svg class="b" style="left:590px;top:77px;" width="16" height="16" viewBox="0 0 16 16"><rect x="0" y="0" width="16" height="16" fill="#bbdefb"/><rect x="0" y="0" width="16" height="4.7" fill="#00bcd4"/><rect x="0" y="0" width="4.7" height="16" fill="#00bcd4"/><g fill="#00acc1"><rect x="4.2" y="0" width="0.8" height="4.7"/><rect x="8" y="0" width="0.8" height="4.7"/><rect x="11.7" y="0" width="0.8" height="4.7"/><rect x="0" y="4.3" width="4.7" height="0.8"/><rect x="0" y="8" width="4.7" height="0.8"/><rect x="0" y="11.7" width="4.7" height="0.8"/></g><g fill="#fff"><rect x="5.4" y="5.6" width="2.3" height="2.3"/><rect x="9.1" y="5.6" width="2.3" height="2.3"/><rect x="12.8" y="5.6" width="2.3" height="2.3"/><rect x="5.4" y="9.3" width="2.3" height="2.3"/><rect x="9.1" y="9.3" width="2.3" height="2.3"/><rect x="12.8" y="9.3" width="2.3" height="2.3"/><rect x="5.4" y="13" width="2.3" height="2.3"/><rect x="9.1" y="13" width="2.3" height="2.3"/><rect x="12.8" y="13" width="2.3" height="2.3"/></g></svg>
<div class="t " style="left:612px;top:78px;letter-spacing:-0.27px">Table: shop_suppliers</div>
<svg class="b" style="left:1510px;top:79px;" width="16" height="16" viewBox="0 0 16 16"><rect x="0.5" y="0.5" width="12" height="13" rx="1" fill="#fff" stroke="#90caf9" stroke-width="1"/><path d="M2.5 3h6M2.5 5h4" stroke="#90a4ae" stroke-width="1"/><path d="M2 7.5h9M2 10h9M5 7.5v5M8 7.5v5" stroke="#90caf9" stroke-width="0.8"/><circle cx="12" cy="12" r="3.6" fill="#4caf50"/><path d="M12 10v4M10 12h4" stroke="#fff" stroke-width="1.2"/></svg>
<div class="b " style="left:342px;top:126px;width:1280px;height:127px;background:#fff;border:1px solid #dcdcdc"></div>
<div class="b " style="left:342px;top:253px;width:1282px;height:9px;background:#f0f0f0"></div>
<div class="b " style="left:406px;top:106px;width:75px;height:21px;background:#f0f0f0;border:1px solid #d9d9d9"></div>
<svg class="b" style="left:411px;top:108px;" width="16" height="16" viewBox="0 0 16 16"><path d="M14.5 3.2 l-2.6 2.6 -1.8 -0.4 -0.4 -1.8 2.6 -2.6 c-1.8 -0.6 -3.6 -0.2 -4.6 1 c-1 1.2 -1.2 2.6 -0.7 4 l-5.6 5.6 c-0.6 0.6 -0.6 1.6 0 2.2 c0.6 0.6 1.6 0.6 2.2 0 l5.6 -5.6 c1.4 0.5 2.9 0.2 4 -0.8 c1.2 -1.2 1.6 -2.8 1.3 -4.2z" fill="#546e7a"/></svg>
<div class="t " style="left:433.5px;top:109px;letter-spacing:0px">Options</div>
<div class="b " style="left:480px;top:106px;width:75px;height:21px;background:#f0f0f0;border:1px solid #d9d9d9"></div>
<svg class="b" style="left:487px;top:108px;" width="16" height="16" viewBox="0 0 16 16"><path d="M6 0 L11 0 L8.5 6 L12 6 L5.5 16 L7 9 L3.5 9 Z" fill="#e91ee3"/></svg>
<div class="t " style="left:509.5px;top:109px;letter-spacing:-0.25px">Indexes</div>
<div class="b " style="left:554px;top:106px;width:101px;height:21px;background:#f0f0f0;border:1px solid #d9d9d9"></div>
<svg class="b" style="left:560px;top:108px;" width="16" height="16" viewBox="0 0 16 16"><g fill="#bbdefb"><rect x="1" y="2" width="4" height="12"/><rect x="11" y="2" width="4" height="12"/></g><g stroke="#64b5f6" stroke-width="1" fill="none"><path d="M1 5h4M1 8h4M1 11h4M11 5h4M11 8h4M11 11h4M1 2v12M15 2v12"/></g><path d="M2 13 C7 13 8 3 14 3" stroke="#1aa39a" stroke-width="1.6" fill="none"/></svg>
<div class="t " style="left:583px;top:109px;letter-spacing:-0.28px">Foreign keys</div>
<div class="b " style="left:654px;top:106px;width:86px;height:21px;background:#f0f0f0;border:1px solid #d9d9d9"></div>
<svg class="b" style="left:661px;top:108px;" width="16" height="16" viewBox="0 0 16 16"><circle cx="8" cy="8" r="7.5" fill="#00acc1"/><path d="M8 8 L8 0.5 A7.5 7.5 0 0 1 15.5 8 Z" fill="#3f51b5"/><path d="M8 8 L15.5 8 A7.5 7.5 0 0 1 12 14.3 Z" fill="#5c6bc0"/></svg>
<div class="t " style="left:683px;top:109px;letter-spacing:-0.1px">Partitions</div>
<div class="b " style="left:739px;top:106px;width:103px;height:21px;background:#f0f0f0;border:1px solid #d9d9d9"></div>
<svg class="b" style="left:745px;top:108px;" width="16" height="16" viewBox="0 0 16 16"><path d="M4.500 4 L1 8 L4.500 12 M11.500 4 L15 8 L11.500 12" stroke="#3f51b5" stroke-width="1.500" fill="none"/><path d="M9.500 2.800 L6.500 13.200" stroke="#42a5f5" stroke-width="1.500" fill="none"/></svg>
<div class="t " style="left:767px;top:109px;letter-spacing:-0.62px">CREATE code</div>
<div class="b " style="left:841px;top:106px;width:94px;height:21px;background:#f0f0f0;border:1px solid #d9d9d9"></div>
<svg class="b" style="left:848px;top:108px;" width="16" height="16" viewBox="0 0 16 16"><path d="M4.500 4 L1 8 L4.500 12 M11.500 4 L15 8 L11.500 12" stroke="#3f51b5" stroke-width="1.500" fill="none"/><path d="M9.500 2.800 L6.500 13.200" stroke="#42a5f5" stroke-width="1.500" fill="none"/></svg>
<div class="t " style="left:870px;top:109px;letter-spacing:-0.6px">ALTER code</div>
<div class="b " style="left:342px;top:104px;width:65px;height:23px;background:#fff;border:1px solid #d9d9d9;border-bottom:none"></div>
<svg class="b" style="left:350px;top:106px;" width="16" height="16" viewBox="0 0 16 16"><rect x="0" y="0" width="16" height="16" fill="#bbdefb"/><rect x="0" y="0" width="16" height="4.7" fill="#00bcd4"/><rect x="0" y="0" width="4.7" height="16" fill="#00bcd4"/><g fill="#00acc1"><rect x="4.2" y="0" width="0.8" height="4.7"/><rect x="8" y="0" width="0.8" height="4.7"/><rect x="11.7" y="0" width="0.8" height="4.7"/><rect x="0" y="4.3" width="4.7" height="0.8"/><rect x="0" y="8" width="4.7" height="0.8"/><rect x="0" y="11.7" width="4.7" height="0.8"/></g><g fill="#fff"><rect x="5.4" y="5.6" width="2.3" height="2.3"/><rect x="9.1" y="5.6" width="2.3" height="2.3"/><rect x="12.8" y="5.6" width="2.3" height="2.3"/><rect x="5.4" y="9.3" width="2.3" height="2.3"/><rect x="9.1" y="9.3" width="2.3" height="2.3"/><rect x="12.8" y="9.3" width="2.3" height="2.3"/><rect x="5.4" y="13" width="2.3" height="2.3"/><rect x="9.1" y="13" width="2.3" height="2.3"/><rect x="12.8" y="13" width="2.3" height="2.3"/></g></svg>
<div class="t " style="left:372px;top:107px;letter-spacing:-0.5px">Basic</div>
<div class="t " style="left:350px;top:136px;">Name:</div>
<div class="b " style="left:442px;top:133px;width:1177px;height:23px;background:#fff;border:1px solid #7a7a7a"></div>
<div class="t " style="left:445px;top:136px;letter-spacing:-0.2px">shop_suppliers</div>
<div class="t " style="left:350px;top:163px;letter-spacing:0.15px">Comment:</div>
<div class="b " style="left:442px;top:160px;width:1177px;height:76px;background:#fff;border:1px solid #7a7a7a"></div>
<div class="t " style="left:448px;top:163px;">Table dùng để lưu trữ thông tin Nhà cung cấp</div>
<div class="b " style="left:1601px;top:161px;width:17px;height:74px;background:#f0f0f0"></div>
<svg class="b" style="left:1604px;top:167px;" width="9" height="6" viewBox="0 0 9 6"><path d="M0.8 5 L4.5 1.2 L8.2 5" stroke="#a6a6a6" stroke-width="1.3" fill="none"/></svg>
<svg class="b" style="left:1604px;top:223px;" width="9" height="6" viewBox="0 0 9 6"><path d="M0.8 1 L4.5 4.8 L8.2 1" stroke="#a6a6a6" stroke-width="1.3" fill="none"/></svg>
<div class="t " style="left:342px;top:265px;">Columns:</div>
<svg class="b" style="left:445px;top:265px;" width="16" height="16" viewBox="0 0 16 16"><circle cx="8" cy="8" r="7.900" fill="#4caf50"/><path d="M8 4v8M4 8h8" stroke="#fff" stroke-width="2.4"/></svg>
<div class="t " style="left:465px;top:265px;">Add</div>
<svg class="b" style="left:515px;top:265px;" width="16" height="16" viewBox="0 0 16 16"><circle cx="8" cy="8" r="7.900" fill="#f44336"/><path d="M5.2 5.2l5.6 5.6M10.8 5.2l-5.6 5.6" stroke="#fff" stroke-width="2.2"/></svg>
<div class="t " style="left:535px;top:265px;letter-spacing:-0.2px">Remove</div>
<svg class="b" style="left:585px;top:265px;" width="16" height="16" viewBox="0 0 16 16"><path d="M0.500 12.500 L8 3.500 L15.500 12.500 Z" fill="#9e9e9e"/></svg>
<div class="t gray" style="left:605px;top:265px;color:#9a9a9a">Up</div>
<svg class="b" style="left:655px;top:265px;" width="16" height="16" viewBox="0 0 16 16"><path d="M0.300 3.500 L15.700 3.500 L8 12.400 Z" fill="#2196f3"/></svg>
<div class="t " style="left:675px;top:265px;">Down</div>
<div class="b " style="left:342px;top:287px;width:1282px;height:314px;background:#fff;border:1px solid #828790"></div>
<div class="b " style="left:365px;top:289px;width:1px;height:20px;background:#e5e5e5"></div>
<div class="t c" style="left:343px;top:291px;width:22px;">#</div>
<div class="b " style="left:541px;top:289px;width:1px;height:20px;background:#e5e5e5"></div>
<div class="t " style="left:372px;top:291px;letter-spacing:0px">Name</div>
<div class="b " style="left:697px;top:289px;width:1px;height:20px;background:#e5e5e5"></div>
<div class="t " style="left:548px;top:291px;letter-spacing:-0.15px">Datatype</div>
<div class="b " style="left:788px;top:289px;width:1px;height:20px;background:#e5e5e5"></div>
<div class="t " style="left:704px;top:291px;letter-spacing:0px">Length/Set</div>
<div class="b " style="left:847px;top:289px;width:1px;height:20px;background:#e5e5e5"></div>
<div class="t " style="left:795px;top:291px;letter-spacing:-0.15px">Unsign...</div>
<div class="b " style="left:912px;top:289px;width:1px;height:20px;background:#e5e5e5"></div>
<div class="t " style="left:855px;top:291px;letter-spacing:0.1px">Allow N...</div>
<div class="b " style="left:962px;top:289px;width:1px;height:20px;background:#e5e5e5"></div>
<div class="t " style="left:919px;top:291px;letter-spacing:0.15px">Zerofill</div>
<div class="b " style="left:1108px;top:289px;width:1px;height:20px;background:#e5e5e5"></div>
<div class="t " style="left:969px;top:291px;letter-spacing:-0.15px">Default</div>
<div class="b " style="left:1243px;top:289px;width:1px;height:20px;background:#e5e5e5"></div>
<div class="t " style="left:1115px;top:291px;letter-spacing:0.2px">Comment</div>
<div class="b " style="left:1383px;top:289px;width:1px;height:20px;background:#e5e5e5"></div>
<div class="t " style="left:1250px;top:291px;letter-spacing:0.15px">Collation</div>
<div class="b " style="left:1483px;top:289px;width:1px;height:20px;background:#e5e5e5"></div>
<div class="t " style="left:1390px;top:291px;letter-spacing:-0.3px">Expression</div>
<div class="b " style="left:1583px;top:289px;width:1px;height:20px;background:#e5e5e5"></div>
<div class="t " style="left:1490px;top:291px;letter-spacing:0.1px">Virtuality</div>
<div class="b " style="left:344px;top:309px;width:1239px;height:19px;background:#a3d3fd;border-top:1px solid #8cc4f8;border-bottom:1px solid #8cc4f8"></div>
<div class="b " style="left:344px;top:309px;width:21px;height:19px;background:#99cbf7"></div>
<div class="b " style="left:365px;top:309px;width:1px;height:19px;background:#e4f1fd"></div>
<div class="b " style="left:541px;top:309px;width:1px;height:19px;background:#e4f1fd"></div>
<div class="b " style="left:697px;top:309px;width:1px;height:19px;background:#e4f1fd"></div>
<div class="b " style="left:788px;top:309px;width:1px;height:19px;background:#e4f1fd"></div>
<div class="b " style="left:847px;top:309px;width:1px;height:19px;background:#e4f1fd"></div>
<div class="b " style="left:912px;top:309px;width:1px;height:19px;background:#e4f1fd"></div>
<div class="b " style="left:962px;top:309px;width:1px;height:19px;background:#e4f1fd"></div>
<div class="b " style="left:1108px;top:309px;width:1px;height:19px;background:#e4f1fd"></div>
<div class="b " style="left:1243px;top:309px;width:1px;height:19px;background:#e4f1fd"></div>
<div class="b " style="left:1383px;top:309px;width:1px;height:19px;background:#e4f1fd"></div>
<div class="b " style="left:1483px;top:309px;width:1px;height:19px;background:#e4f1fd"></div>
<div class="b " style="left:1583px;top:309px;width:1px;height:19px;background:#e4f1fd"></div>
<div class="t r" style="left:343px;top:311px;width:17px;">1</div>
<div class="t " style="left:376px;top:311px;letter-spacing:-0.2px">id</div>
<div class="t " style="left:708px;top:311px;letter-spacing:-0.7px">20</div>
<div class="b " style="left:810px;top:311px;width:15px;height:15px;background:#f4faee;border:2px solid #8bc34a;border-radius:3px"></div>
<svg class="b" style="left:813px;top:314px;" width="10" height="9" viewBox="0 0 10 9"><path d="M1.2 4.2 L3.8 6.8 L8.2 1.8" stroke="#33691e" stroke-width="1.4" fill="none"/></svg>
<div class="b " style="left:872px;top:311px;width:15px;height:15px;background:#e3f2fd;border:2px solid #2d96f0;border-radius:3px"></div>
<div class="b " style="left:930px;top:311px;width:15px;height:15px;background:#e3f2fd;border:2px solid #2d96f0;border-radius:3px"></div>
<div class="t " style="left:973px;top:311px;color:#000;letter-spacing:-0.8px">AUTO_INCREMENT</div>
<div class="t " style="left:1119px;top:311px;letter-spacing:-0.05px"></div>
<div class="t " style="left:1254px;top:311px;"></div>
<div class="b " style="left:344px;top:329px;width:21px;height:19px;background:#f0f0f0"></div>
<div class="b " style="left:366px;top:348px;width:1218px;height:1px;background:repeating-linear-gradient(90deg,#e4e4e4 0 1px,#fff 1px 2px)"></div>
<div class="b " style="left:541px;top:329px;width:1px;height:20px;background:repeating-linear-gradient(180deg,#e4e4e4 0 1px,#fff 1px 2px)"></div>
<div class="b " style="left:697px;top:329px;width:1px;height:20px;background:repeating-linear-gradient(180deg,#e4e4e4 0 1px,#fff 1px 2px)"></div>
<div class="b " style="left:788px;top:329px;width:1px;height:20px;background:repeating-linear-gradient(180deg,#e4e4e4 0 1px,#fff 1px 2px)"></div>
<div class="b " style="left:847px;top:329px;width:1px;height:20px;background:repeating-linear-gradient(180deg,#e4e4e4 0 1px,#fff 1px 2px)"></div>
<div class="b " style="left:912px;top:329px;width:1px;height:20px;background:repeating-linear-gradient(180deg,#e4e4e4 0 1px,#fff 1px 2px)"></div>
<div class="b " style="left:962px;top:329px;width:1px;height:20px;background:repeating-linear-gradient(180deg,#e4e4e4 0 1px,#fff 1px 2px)"></div>
<div class="b " style="left:1108px;top:329px;width:1px;height:20px;background:repeating-linear-gradient(180deg,#e4e4e4 0 1px,#fff 1px 2px)"></div>
<div class="b " style="left:1243px;top:329px;width:1px;height:20px;background:repeating-linear-gradient(180deg,#e4e4e4 0 1px,#fff 1px 2px)"></div>
<div class="b " style="left:1383px;top:329px;width:1px;height:20px;background:repeating-linear-gradient(180deg,#e4e4e4 0 1px,#fff 1px 2px)"></div>
<div class="b " style="left:1483px;top:329px;width:1px;height:20px;background:repeating-linear-gradient(180deg,#e4e4e4 0 1px,#fff 1px 2px)"></div>
<div class="b " style="left:1583px;top:329px;width:1px;height:20px;background:repeating-linear-gradient(180deg,#e4e4e4 0 1px,#fff 1px 2px)"></div>
<div class="t r" style="left:343px;top:331px;width:17px;">2</div>
<div class="t " style="left:376px;top:331px;letter-spacing:-0.2px">supplier_code</div>
<div class="t " style="left:708px;top:331px;letter-spacing:-0.7px">50</div>
<div class="b " style="left:810px;top:331px;width:15px;height:15px;background:#e9e9e9;border:2px solid #757575;border-radius:3px"></div>
<div class="b " style="left:872px;top:331px;width:15px;height:15px;background:#e3f2fd;border:2px solid #2d96f0;border-radius:3px"></div>
<div class="b " style="left:930px;top:331px;width:15px;height:15px;background:#e9e9e9;border:2px solid #757575;border-radius:3px"></div>
<div class="t " style="left:973px;top:331px;color:#5cb85c;letter-spacing:0.1px">No default</div>
<div class="t " style="left:1119px;top:331px;letter-spacing:-0.05px">Mã nhà cung cấp</div>
<div class="t " style="left:1254px;top:331px;">utf8mb4_unicode_ci</div>
<div class="b " style="left:344px;top:349px;width:21px;height:19px;background:#f0f0f0"></div>
<div class="b " style="left:366px;top:368px;width:1218px;height:1px;background:repeating-linear-gradient(90deg,#e4e4e4 0 1px,#fff 1px 2px)"></div>
<div class="b " style="left:541px;top:349px;width:1px;height:20px;background:repeating-linear-gradient(180deg,#e4e4e4 0 1px,#fff 1px 2px)"></div>
<div class="b " style="left:697px;top:349px;width:1px;height:20px;background:repeating-linear-gradient(180deg,#e4e4e4 0 1px,#fff 1px 2px)"></div>
<div class="b " style="left:788px;top:349px;width:1px;height:20px;background:repeating-linear-gradient(180deg,#e4e4e4 0 1px,#fff 1px 2px)"></div>
<div class="b " style="left:847px;top:349px;width:1px;height:20px;background:repeating-linear-gradient(180deg,#e4e4e4 0 1px,#fff 1px 2px)"></div>
<div class="b " style="left:912px;top:349px;width:1px;height:20px;background:repeating-linear-gradient(180deg,#e4e4e4 0 1px,#fff 1px 2px)"></div>
<div class="b " style="left:962px;top:349px;width:1px;height:20px;background:repeating-linear-gradient(180deg,#e4e4e4 0 1px,#fff 1px 2px)"></div>
<div class="b " style="left:1108px;top:349px;width:1px;height:20px;background:repeating-linear-gradient(180deg,#e4e4e4 0 1px,#fff 1px 2px)"></div>
<div class="b " style="left:1243px;top:349px;width:1px;height:20px;background:repeating-linear-gradient(180deg,#e4e4e4 0 1px,#fff 1px 2px)"></div>
<div class="b " style="left:1383px;top:349px;width:1px;height:20px;background:repeating-linear-gradient(180deg,#e4e4e4 0 1px,#fff 1px 2px)"></div>
<div class="b " style="left:1483px;top:349px;width:1px;height:20px;background:repeating-linear-gradient(180deg,#e4e4e4 0 1px,#fff 1px 2px)"></div>
<div class="b " style="left:1583px;top:349px;width:1px;height:20px;background:repeating-linear-gradient(180deg,#e4e4e4 0 1px,#fff 1px 2px)"></div>
<div class="t r" style="left:343px;top:351px;width:17px;">3</div>
<div class="t " style="left:376px;top:351px;letter-spacing:-0.2px">supplier_name</div>
<div class="t " style="left:708px;top:351px;letter-spacing:-0.7px">500</div>
<div class="b " style="left:810px;top:351px;width:15px;height:15px;background:#e9e9e9;border:2px solid #757575;border-radius:3px"></div>
<div class="b " style="left:872px;top:351px;width:15px;height:15px;background:#e3f2fd;border:2px solid #2d96f0;border-radius:3px"></div>
<div class="b " style="left:930px;top:351px;width:15px;height:15px;background:#e9e9e9;border:2px solid #757575;border-radius:3px"></div>
<div class="t " style="left:973px;top:351px;color:#5cb85c;letter-spacing:0.1px">No default</div>
<div class="t " style="left:1119px;top:351px;letter-spacing:-0.05px">Tên nhà cung cấp</div>
<div class="t " style="left:1254px;top:351px;">utf8mb4_unicode_ci</div>
<div class="b " style="left:344px;top:369px;width:21px;height:19px;background:#f0f0f0"></div>
<div class="b " style="left:366px;top:388px;width:1218px;height:1px;background:repeating-linear-gradient(90deg,#e4e4e4 0 1px,#fff 1px 2px)"></div>
<div class="b " style="left:541px;top:369px;width:1px;height:20px;background:repeating-linear-gradient(180deg,#e4e4e4 0 1px,#fff 1px 2px)"></div>
<div class="b " style="left:697px;top:369px;width:1px;height:20px;background:repeating-linear-gradient(180deg,#e4e4e4 0 1px,#fff 1px 2px)"></div>
<div class="b " style="left:788px;top:369px;width:1px;height:20px;background:repeating-linear-gradient(180deg,#e4e4e4 0 1px,#fff 1px 2px)"></div>
<div class="b " style="left:847px;top:369px;width:1px;height:20px;background:repeating-linear-gradient(180deg,#e4e4e4 0 1px,#fff 1px 2px)"></div>
<div class="b " style="left:912px;top:369px;width:1px;height:20px;background:repeating-linear-gradient(180deg,#e4e4e4 0 1px,#fff 1px 2px)"></div>
<div class="b " style="left:962px;top:369px;width:1px;height:20px;background:repeating-linear-gradient(180deg,#e4e4e4 0 1px,#fff 1px 2px)"></div>
<div class="b " style="left:1108px;top:369px;width:1px;height:20px;background:repeating-linear-gradient(180deg,#e4e4e4 0 1px,#fff 1px 2px)"></div>
<div class="b " style="left:1243px;top:369px;width:1px;height:20px;background:repeating-linear-gradient(180deg,#e4e4e4 0 1px,#fff 1px 2px)"></div>
<div class="b " style="left:1383px;top:369px;width:1px;height:20px;background:repeating-linear-gradient(180deg,#e4e4e4 0 1px,#fff 1px 2px)"></div>
<div class="b " style="left:1483px;top:369px;width:1px;height:20px;background:repeating-linear-gradient(180deg,#e4e4e4 0 1px,#fff 1px 2px)"></div>
<div class="b " style="left:1583px;top:369px;width:1px;height:20px;background:repeating-linear-gradient(180deg,#e4e4e4 0 1px,#fff 1px 2px)"></div>
<div class="t r" style="left:343px;top:371px;width:17px;">4</div>
<div class="t " style="left:376px;top:371px;letter-spacing:-0.2px">description</div>
<div class="t " style="left:708px;top:371px;letter-spacing:-0.7px">65535</div>
<div class="b " style="left:810px;top:371px;width:15px;height:15px;background:#e9e9e9;border:2px solid #757575;border-radius:3px"></div>
<div class="b " style="left:872px;top:371px;width:15px;height:15px;background:#f4faee;border:2px solid #8bc34a;border-radius:3px"></div>
<svg class="b" style="left:875px;top:374px;" width="10" height="9" viewBox="0 0 10 9"><path d="M1.2 4.2 L3.8 6.8 L8.2 1.8" stroke="#33691e" stroke-width="1.4" fill="none"/></svg>
<div class="b " style="left:930px;top:371px;width:15px;height:15px;background:#e9e9e9;border:2px solid #757575;border-radius:3px"></div>
<div class="t " style="left:973px;top:371px;color:#5cb85c;letter-spacing:-0.3px">NULL</div>
<div class="t " style="left:1119px;top:371px;letter-spacing:-0.05px">Diễn giải</div>
<div class="t " style="left:1254px;top:371px;">utf8mb4_unicode_ci</div>
<div class="b " style="left:344px;top:389px;width:21px;height:19px;background:#f0f0f0"></div>
<div class="b " style="left:366px;top:408px;width:1218px;height:1px;background:repeating-linear-gradient(90deg,#e4e4e4 0 1px,#fff 1px 2px)"></div>
<div class="b " style="left:541px;top:389px;width:1px;height:20px;background:repeating-linear-gradient(180deg,#e4e4e4 0 1px,#fff 1px 2px)"></div>
<div class="b " style="left:697px;top:389px;width:1px;height:20px;background:repeating-linear-gradient(180deg,#e4e4e4 0 1px,#fff 1px 2px)"></div>
<div class="b " style="left:788px;top:389px;width:1px;height:20px;background:repeating-linear-gradient(180deg,#e4e4e4 0 1px,#fff 1px 2px)"></div>
<div class="b " style="left:847px;top:389px;width:1px;height:20px;background:repeating-linear-gradient(180deg,#e4e4e4 0 1px,#fff 1px 2px)"></div>
<div class="b " style="left:912px;top:389px;width:1px;height:20px;background:repeating-linear-gradient(180deg,#e4e4e4 0 1px,#fff 1px 2px)"></div>
<div class="b " style="left:962px;top:389px;width:1px;height:20px;background:repeating-linear-gradient(180deg,#e4e4e4 0 1px,#fff 1px 2px)"></div>
<div class="b " style="left:1108px;top:389px;width:1px;height:20px;background:repeating-linear-gradient(180deg,#e4e4e4 0 1px,#fff 1px 2px)"></div>
<div class="b " style="left:1243px;top:389px;width:1px;height:20px;background:repeating-linear-gradient(180deg,#e4e4e4 0 1px,#fff 1px 2px)"></div>
<div class="b " style="left:1383px;top:389px;width:1px;height:20px;background:repeating-linear-gradient(180deg,#e4e4e4 0 1px,#fff 1px 2px)"></div>
<div class="b " style="left:1483px;top:389px;width:1px;height:20px;background:repeating-linear-gradient(180deg,#e4e4e4 0 1px,#fff 1px 2px)"></div>
<div class="b " style="left:1583px;top:389px;width:1px;height:20px;background:repeating-linear-gradient(180deg,#e4e4e4 0 1px,#fff 1px 2px)"></div>
<div class="t r" style="left:343px;top:391px;width:17px;">5</div>
<div class="t " style="left:376px;top:391px;letter-spacing:-0.2px">image</div>
<div class="t " style="left:708px;top:391px;letter-spacing:-0.7px">65535</div>
<div class="b " style="left:810px;top:391px;width:15px;height:15px;background:#e9e9e9;border:2px solid #757575;border-radius:3px"></div>
<div class="b " style="left:872px;top:391px;width:15px;height:15px;background:#f4faee;border:2px solid #8bc34a;border-radius:3px"></div>
<svg class="b" style="left:875px;top:394px;" width="10" height="9" viewBox="0 0 10 9"><path d="M1.2 4.2 L3.8 6.8 L8.2 1.8" stroke="#33691e" stroke-width="1.4" fill="none"/></svg>
<div class="b " style="left:930px;top:391px;width:15px;height:15px;background:#e9e9e9;border:2px solid #757575;border-radius:3px"></div>
<div class="t " style="left:973px;top:391px;color:#5cb85c;letter-spacing:-0.3px">NULL</div>
<div class="t " style="left:1119px;top:391px;letter-spacing:-0.05px">Ảnh đại diện</div>
<div class="t " style="left:1254px;top:391px;">utf8mb4_unicode_ci</div>
<div class="b " style="left:344px;top:409px;width:21px;height:19px;background:#f0f0f0"></div>
<div class="b " style="left:366px;top:428px;width:1218px;height:1px;background:repeating-linear-gradient(90deg,#e4e4e4 0 1px,#fff 1px 2px)"></div>
<div class="b " style="left:541px;top:409px;width:1px;height:20px;background:repeating-linear-gradient(180deg,#e4e4e4 0 1px,#fff 1px 2px)"></div>
<div class="b " style="left:697px;top:409px;width:1px;height:20px;background:repeating-linear-gradient(180deg,#e4e4e4 0 1px,#fff 1px 2px)"></div>
<div class="b " style="left:788px;top:409px;width:1px;height:20px;background:repeating-linear-gradient(180deg,#e4e4e4 0 1px,#fff 1px 2px)"></div>
<div class="b " style="left:847px;top:409px;width:1px;height:20px;background:repeating-linear-gradient(180deg,#e4e4e4 0 1px,#fff 1px 2px)"></div>
<div class="b " style="left:912px;top:409px;width:1px;height:20px;background:repeating-linear-gradient(180deg,#e4e4e4 0 1px,#fff 1px 2px)"></div>
<div class="b " style="left:962px;top:409px;width:1px;height:20px;background:repeating-linear-gradient(180deg,#e4e4e4 0 1px,#fff 1px 2px)"></div>
<div class="b " style="left:1108px;top:409px;width:1px;height:20px;background:repeating-linear-gradient(180deg,#e4e4e4 0 1px,#fff 1px 2px)"></div>
<div class="b " style="left:1243px;top:409px;width:1px;height:20px;background:repeating-linear-gradient(180deg,#e4e4e4 0 1px,#fff 1px 2px)"></div>
<div class="b " style="left:1383px;top:409px;width:1px;height:20px;background:repeating-linear-gradient(180deg,#e4e4e4 0 1px,#fff 1px 2px)"></div>
<div class="b " style="left:1483px;top:409px;width:1px;height:20px;background:repeating-linear-gradient(180deg,#e4e4e4 0 1px,#fff 1px 2px)"></div>
<div class="b " style="left:1583px;top:409px;width:1px;height:20px;background:repeating-linear-gradient(180deg,#e4e4e4 0 1px,#fff 1px 2px)"></div>
<div class="t r" style="left:343px;top:411px;width:17px;">6</div>
<div class="t " style="left:376px;top:411px;letter-spacing:-0.2px">created_at</div>
<div class="t " style="left:708px;top:411px;letter-spacing:-0.7px"></div>
<div class="b " style="left:810px;top:411px;width:15px;height:15px;background:#e9e9e9;border:2px solid #757575;border-radius:3px"></div>
<div class="b " style="left:872px;top:411px;width:15px;height:15px;background:#f4faee;border:2px solid #8bc34a;border-radius:3px"></div>
<svg class="b" style="left:875px;top:414px;" width="10" height="9" viewBox="0 0 10 9"><path d="M1.2 4.2 L3.8 6.8 L8.2 1.8" stroke="#33691e" stroke-width="1.4" fill="none"/></svg>
<div class="b " style="left:930px;top:411px;width:15px;height:15px;background:#e9e9e9;border:2px solid #757575;border-radius:3px"></div>
<div class="t " style="left:973px;top:411px;color:#c2394f;letter-spacing:-0.3px">NULL</div>
<div class="t " style="left:1119px;top:411px;letter-spacing:-0.05px"></div>
<div class="t " style="left:1254px;top:411px;"></div>
<div class="b " style="left:344px;top:429px;width:21px;height:19px;background:#f0f0f0"></div>
<div class="b " style="left:366px;top:448px;width:1218px;height:1px;background:repeating-linear-gradient(90deg,#e4e4e4 0 1px,#fff 1px 2px)"></div>
<div class="b " style="left:541px;top:429px;width:1px;height:20px;background:repeating-linear-gradient(180deg,#e4e4e4 0 1px,#fff 1px 2px)"></div>
<div class="b " style="left:697px;top:429px;width:1px;height:20px;background:repeating-linear-gradient(180deg,#e4e4e4 0 1px,#fff 1px 2px)"></div>
<div class="b " style="left:788px;top:429px;width:1px;height:20px;background:repeating-linear-gradient(180deg,#e4e4e4 0 1px,#fff 1px 2px)"></div>
<div class="b " style="left:847px;top:429px;width:1px;height:20px;background:repeating-linear-gradient(180deg,#e4e4e4 0 1px,#fff 1px 2px)"></div>
<div class="b " style="left:912px;top:429px;width:1px;height:20px;background:repeating-linear-gradient(180deg,#e4e4e4 0 1px,#fff 1px 2px)"></div>
<div class="b " style="left:962px;top:429px;width:1px;height:20px;background:repeating-linear-gradient(180deg,#e4e4e4 0 1px,#fff 1px 2px)"></div>
<div class="b " style="left:1108px;top:429px;width:1px;height:20px;background:repeating-linear-gradient(180deg,#e4e4e4 0 1px,#fff 1px 2px)"></div>
<div class="b " style="left:1243px;top:429px;width:1px;height:20px;background:repeating-linear-gradient(180deg,#e4e4e4 0 1px,#fff 1px 2px)"></div>
<div class="b " style="left:1383px;top:429px;width:1px;height:20px;background:repeating-linear-gradient(180deg,#e4e4e4 0 1px,#fff 1px 2px)"></div>
<div class="b " style="left:1483px;top:429px;width:1px;height:20px;background:repeating-linear-gradient(180deg,#e4e4e4 0 1px,#fff 1px 2px)"></div>
<div class="b " style="left:1583px;top:429px;width:1px;height:20px;background:repeating-linear-gradient(180deg,#e4e4e4 0 1px,#fff 1px 2px)"></div>
<div class="t r" style="left:343px;top:431px;width:17px;">7</div>
<div class="t " style="left:376px;top:431px;letter-spacing:-0.2px">updated_at</div>
<div class="t " style="left:708px;top:431px;letter-spacing:-0.7px"></div>
<div class="b " style="left:810px;top:431px;width:15px;height:15px;background:#e9e9e9;border:2px solid #757575;border-radius:3px"></div>
<div class="b " style="left:872px;top:431px;width:15px;height:15px;background:#f4faee;border:2px solid #8bc34a;border-radius:3px"></div>
<svg class="b" style="left:875px;top:434px;" width="10" height="9" viewBox="0 0 10 9"><path d="M1.2 4.2 L3.8 6.8 L8.2 1.8" stroke="#33691e" stroke-width="1.4" fill="none"/></svg>
<div class="b " style="left:930px;top:431px;width:15px;height:15px;background:#e9e9e9;border:2px solid #757575;border-radius:3px"></div>
<div class="t " style="left:973px;top:431px;color:#c2394f;letter-spacing:-0.3px">NULL</div>
<div class="t " style="left:1119px;top:431px;letter-spacing:-0.05px"></div>
<div class="t " style="left:1254px;top:431px;"></div>
<div class="b " style="left:343px;top:606px;width:73px;height:23px;background:#e1e1e1;border:1px solid #adadad"></div>
<div class="t c" style="left:343px;top:610px;width:73px;">Help</div>
<div class="b " style="left:424px;top:606px;width:73px;height:23px;background:#e1e1e1;border:1px solid #adadad"></div>
<div class="t c" style="left:424px;top:610px;width:73px;">Discard</div>
<div class="b " style="left:505px;top:606px;width:73px;height:23px;background:#e1e1e1;border:2px solid #0078d7"></div>
<div class="t c" style="left:505px;top:610px;width:73px;">Save</div>
<svg class="b" style="left:1500px;top:512px;" width="114" height="80" viewBox="1500 512 114 80"><g fill="#f6a1a6"><path d="M1506,525 L1552,541.5 Q1556,543.5 1556.5,548 L1556.5,586.5 C1551,581 1546,577.5 1539.5,576 C1533,574.5 1528,573 1524,570 C1521,568 1519,566.5 1517.5,565 Q1510,546 1506,525 Z"/><path d="M1608.0,525 L1562.0,541.5 Q1558.0,543.5 1557.5,548 L1557.5,586.5 C1563.0,581 1568.0,577.5 1574.5,576 C1581.0,574.5 1586.0,573 1590.0,570 C1593.0,568 1595.0,566.5 1596.5,565 Q1604.0,546 1608.0,525 Z"/><path d="M1509.9,520.8 L1507.3,524.2 L1551.4,540 L1552.6,538.6 Z"/><path d="M1604.1,520.8 L1606.7,524.2 L1562.6,540 L1561.4,538.6 Z"/><path d="M1514,516.9 L1511.4,520.1 L1550.5,537 L1551.7,535.9 Z"/><path d="M1600.0,516.9 L1602.6,520.1 L1563.5,537 L1562.3,535.9 Z"/></g><path d="M1557,579.5 C1552,573.5 1537,567 1537,557.5 C1537,551 1542,547.7 1547,547.7 C1551.5,547.7 1555,549.5 1557,551.5 C1559,549.5 1562.5,547.7 1567,547.7 C1572,547.7 1577,551 1577,557.5 C1577,567 1562,573.5 1557,579.5Z" fill="#fff"/></svg>
<div class="t" style="left:1494.8px;top:589.3px;font-family:'Liberation Serif',serif;font-weight:bold;font-size:17px;letter-spacing:1.16px;color:rgba(240,103,111,.62);line-height:18px;height:18px">NENTANG.VN</div>
<div class="t" style="left:1496.2px;top:606px;font-size:7.8px;letter-spacing:0.33px;color:rgba(240,103,111,.62);line-height:10px;height:10px">HÀNH TRANG TỚI TƯƠNG LAI</div>
<div class="b " style="left:476px;top:316px;width:216px;height:216px;background:#f2f2f2;border:1px solid #b4b4b4;box-shadow:2px 2px 1.5px rgba(0,0,0,.5),4px 4px 3px rgba(0,0,0,.22)"></div>
<div class="b " style="left:479px;top:485px;width:208px;height:22px;background:#91c9f7"></div>
<svg class="b" style="left:482px;top:322px;" width="16" height="16" viewBox="0 0 16 16"><path d="M1 1 h6 l3 3 v8 h-9z" fill="#42a5f5"/><path d="M5 4 h6 l3.5 3.5 v8.5 h-9.5z" fill="#64b5f6"/><path d="M7.500 9.500h5M7.500 11.500h5M7.500 13.500h4" stroke="#1565c0" stroke-width="1"/></svg>
<div class="t " style="left:510px;top:322px;color:#000;letter-spacing:-0.1px">Copy</div>
<div class="t r" style="left:568px;top:322px;width:100px;color:#000;letter-spacing:-0.1px">Ctrl+C</div>
<svg class="b" style="left:482px;top:344px;" width="16" height="16" viewBox="0 0 16 16"><rect x="0.800" y="2.800" width="11" height="5.400" rx="1" fill="none" stroke="#90caf9" stroke-width="1.300"/><rect x="4" y="5.800" width="11" height="5.400" rx="1" fill="#f2f2f2" stroke="#7bbcf7" stroke-width="1.300"/></svg>
<div class="t " style="left:510px;top:344px;color:#000;letter-spacing:-0.1px">Copy selected columns</div>
<svg class="b" style="left:482px;top:366px;" width="16" height="16" viewBox="0 0 16 16"><rect x="2" y="2.5" width="10" height="12" rx="1.2" fill="#f2f2f2" stroke="#bdbdbd" stroke-width="1.2"/><rect x="4.5" y="1" width="5" height="2.6" rx="0.8" fill="#cfcfcf"/><rect x="6" y="9" width="6.500" height="4" fill="none" stroke="#cfcfcf" stroke-width="1"/></svg>
<div class="t " style="left:510px;top:366px;color:#838383;letter-spacing:-0.1px">Paste columns</div>
<div class="b " style="left:508px;top:387px;width:181px;height:1px;background:#d0d0d0"></div>
<svg class="b" style="left:482px;top:394px;" width="16" height="16" viewBox="0 0 16 16"><circle cx="8" cy="8" r="7.900" fill="#4caf50"/><path d="M8 4v8M4 8h8" stroke="#fff" stroke-width="2.4"/></svg>
<div class="t " style="left:510px;top:394px;color:#000;letter-spacing:-0.1px">Add column</div>
<div class="t r" style="left:568px;top:394px;width:100px;color:#000;letter-spacing:-0.1px">Ctrl+Ins</div>
<svg class="b" style="left:482px;top:416px;" width="16" height="16" viewBox="0 0 16 16"><circle cx="8" cy="8" r="7.900" fill="#f44336"/><path d="M5.2 5.2l5.6 5.6M10.8 5.2l-5.6 5.6" stroke="#fff" stroke-width="2.2"/></svg>
<div class="t " style="left:510px;top:416px;color:#000;letter-spacing:-0.1px">Remove column</div>
<div class="t r" style="left:568px;top:416px;width:100px;color:#000;letter-spacing:-0.1px">Ctrl+Del</div>
<svg class="b" style="left:482px;top:438px;" width="16" height="16" viewBox="0 0 16 16"><path d="M0.500 12.500 L8 3.500 L15.500 12.500 Z" fill="#cfcfcf"/></svg>
<div class="t " style="left:510px;top:438px;color:#838383;letter-spacing:-0.1px">Move up</div>
<div class="t r" style="left:568px;top:438px;width:100px;color:#a8a8a8;letter-spacing:-0.1px">Ctrl+U</div>
<svg class="b" style="left:482px;top:460px;" width="16" height="16" viewBox="0 0 16 16"><path d="M0.300 3.500 L15.700 3.500 L8 12.400 Z" fill="#2196f3"/></svg>
<div class="t " style="left:510px;top:460px;color:#000;letter-spacing:-0.1px">Move down</div>
<div class="t r" style="left:568px;top:460px;width:100px;color:#000;letter-spacing:-0.1px">Ctrl+D</div>
<div class="b " style="left:508px;top:481px;width:181px;height:1px;background:#d0d0d0"></div>
<svg class="b" style="left:482px;top:488px;" width="16" height="16" viewBox="0 0 16 16"><path d="M6 0 L11 0 L8.5 6 L12 6 L5.5 16 L7 9 L3.5 9 Z" fill="#e91ee3"/></svg>
<div class="t " style="left:510px;top:488px;color:#000;letter-spacing:-0.1px">Create new index</div>
<svg class="b" style="left:482px;top:510px;" width="16" height="16" viewBox="0 0 16 16"><path d="M6 0 L11 0 L8.5 6 L12 6 L5.5 16 L7 9 L3.5 9 Z" fill="#9e9e9e"/></svg>
<div class="t " style="left:510px;top:510px;color:#838383;letter-spacing:-0.1px">Add to index</div>
<svg class="b" style="left:677px;top:491px;" width="5" height="9" viewBox="0 0 5 9"><path d="M0.5 0.5 L4.5 4.5 L0.5 8.5Z" fill="#fff"/></svg>
<div class="b " style="left:686px;top:482px;width:135px;height:115px;background:#f2f2f2;border:1px solid #b4b4b4;box-shadow:2px 2px 1.5px rgba(0,0,0,.5),4px 4px 3px rgba(0,0,0,.22)"></div>
<div class="b " style="left:689px;top:485px;width:130px;height:22px;background:#91c9f7"></div>
<svg class="b" style="left:692px;top:488px;" width="16" height="16" viewBox="0 0 16 16"><path d="M4.2 0 h7.6 a2 2 0 0 1 2 2 v2.6 c0 2.2 -1.400 3.600 -3.200 4.200 v1.700 l-1 0.700 l1 0.800 v1 l-1 0.700 l1 0.800 v0.600 l-1.200 0.900 h-1.300 l-1.200 -0.900 v-6.300 c-1.800 -0.600 -3.200 -2 -3.200 -4.200 v-2.600 a2 2 0 0 1 2 -2z" fill="#ffa726"/><rect x="5.800" y="1.700" width="4.400" height="1.700" rx="0.600" fill="#fff" opacity=".85"/></svg>
<div class="t " style="left:720px;top:488px;letter-spacing:-0.64px">PRIMARY</div>
<svg class="b" style="left:692px;top:510px;" width="16" height="16" viewBox="0 0 16 16"><path d="M4.2 0 h7.6 a2 2 0 0 1 2 2 v2.6 c0 2.2 -1.400 3.600 -3.200 4.200 v1.700 l-1 0.700 l1 0.800 v1 l-1 0.700 l1 0.800 v0.600 l-1.200 0.900 h-1.300 l-1.200 -0.900 v-6.300 c-1.800 -0.600 -3.200 -2 -3.200 -4.200 v-2.600 a2 2 0 0 1 2 -2z" fill="#43b02a"/><rect x="5.800" y="1.700" width="4.400" height="1.700" rx="0.600" fill="#fff" opacity=".85"/></svg>
<div class="t " style="left:720px;top:510px;letter-spacing:-1.47px">KEY</div>
<svg class="b" style="left:692px;top:532px;" width="16" height="16" viewBox="0 0 16 16"><path d="M4.2 0 h7.6 a2 2 0 0 1 2 2 v2.6 c0 2.2 -1.400 3.600 -3.200 4.200 v1.700 l-1 0.700 l1 0.800 v1 l-1 0.700 l1 0.800 v0.600 l-1.200 0.900 h-1.300 l-1.200 -0.900 v-6.300 c-1.800 -0.600 -3.200 -2 -3.200 -4.200 v-2.600 a2 2 0 0 1 2 -2z" fill="#c62839"/><rect x="5.800" y="1.700" width="4.400" height="1.700" rx="0.600" fill="#fff" opacity=".85"/></svg>
<div class="t " style="left:720px;top:532px;letter-spacing:-0.67px">UNIQUE</div>
<svg class="b" style="left:692px;top:554px;" width="16" height="16" viewBox="0 0 16 16"><path d="M4.2 0 h7.6 a2 2 0 0 1 2 2 v2.6 c0 2.2 -1.400 3.600 -3.200 4.200 v1.700 l-1 0.700 l1 0.800 v1 l-1 0.700 l1 0.800 v0.600 l-1.200 0.900 h-1.300 l-1.200 -0.900 v-6.300 c-1.800 -0.600 -3.200 -2 -3.200 -4.200 v-2.600 a2 2 0 0 1 2 -2z" fill="#1565ff"/><rect x="5.800" y="1.700" width="4.400" height="1.700" rx="0.600" fill="#fff" opacity=".85"/></svg>
<div class="t " style="left:720px;top:554px;letter-spacing:-1.14px">FULLTEXT</div>
<svg class="b" style="left:692px;top:576px;" width="16" height="16" viewBox="0 0 16 16"><path d="M4.2 0 h7.6 a2 2 0 0 1 2 2 v2.6 c0 2.2 -1.400 3.600 -3.200 4.200 v1.700 l-1 0.700 l1 0.800 v1 l-1 0.700 l1 0.800 v0.600 l-1.200 0.900 h-1.300 l-1.200 -0.900 v-6.300 c-1.800 -0.600 -3.200 -2 -3.200 -4.200 v-2.600 a2 2 0 0 1 2 -2z" fill="#2d9cf4"/><rect x="5.800" y="1.700" width="4.400" height="1.700" rx="0.600" fill="#fff" opacity=".85"/></svg>
<div class="t " style="left:720px;top:576px;letter-spacing:-0.87px">SPATIAL</div>
<svg class="b" style="left:393.7px;top:300.6px;" width="30" height="32" viewBox="0 0 30 32"><circle cx="15" cy="15" r="10.7" fill="#ee3a3a" style="filter:drop-shadow(0.4px 1px 0.7px rgba(0,0,0,.45))"/><text x="15" y="22.60" font-family="Liberation Sans, sans-serif" font-size="16px" text-anchor="middle" fill="#fff" stroke="#fff" stroke-width="0.35">1</text></svg>
<svg class="b" style="left:413.6px;top:293.2px;" width="420" height="44" viewBox="0 0 420 44"><text x="8" y="30" font-family="Liberation Sans, sans-serif" font-weight="bold" font-size="21.5px" letter-spacing="0.19" fill="#fff" stroke="#ee3a3a" stroke-width="5" stroke-linejoin="round" paint-order="stroke" style="filter:drop-shadow(0.6px 1px 0.7px rgba(0,0,0,.55))">Chọn column ID</text></svg>
<svg class="b" style="left:608.7px;top:481.2px;" width="30" height="32" viewBox="0 0 30 32"><circle cx="15" cy="15" r="11.8" fill="#ee3a3a" style="filter:drop-shadow(0.4px 1px 0.7px rgba(0,0,0,.45))"/><text x="15" y="22.30" font-family="Liberation Sans, sans-serif" font-size="16px" text-anchor="middle" fill="#fff" stroke="#fff" stroke-width="0.35">2</text></svg>
<svg class="b" style="left:776.3px;top:481.2px;" width="30" height="32" viewBox="0 0 30 32"><circle cx="15" cy="15" r="11.8" fill="#ee3a3a" style="filter:drop-shadow(0.4px 1px 0.7px rgba(0,0,0,.45))"/><text x="15" y="22.30" font-family="Liberation Sans, sans-serif" font-size="16px" text-anchor="middle" fill="#fff" stroke="#fff" stroke-width="0.35">3</text></svg>
<svg class="b" style="left:797.2px;top:472px;" width="420" height="44" viewBox="0 0 420 44"><text x="8" y="30" font-family="Liberation Sans, sans-serif" font-weight="bold" font-size="21.5px" letter-spacing="0.33" fill="#fff" stroke="#ee3a3a" stroke-width="5" stroke-linejoin="round" paint-order="stroke" style="filter:drop-shadow(0.6px 1px 0.7px rgba(0,0,0,.55))">Tạo khóa chính PRIMARY</text></svg>
<svg class="b" style="left:801.7px;top:496.5px;" width="13" height="21" viewBox="0 0 13 21"><path d="M1 1 L1 16.500 L4.800 13 L7.500 19.500 L10 18.400 L7.300 12 L12 12 Z" fill="#fff" stroke="#000" stroke-width="1"/></svg></body></html>
